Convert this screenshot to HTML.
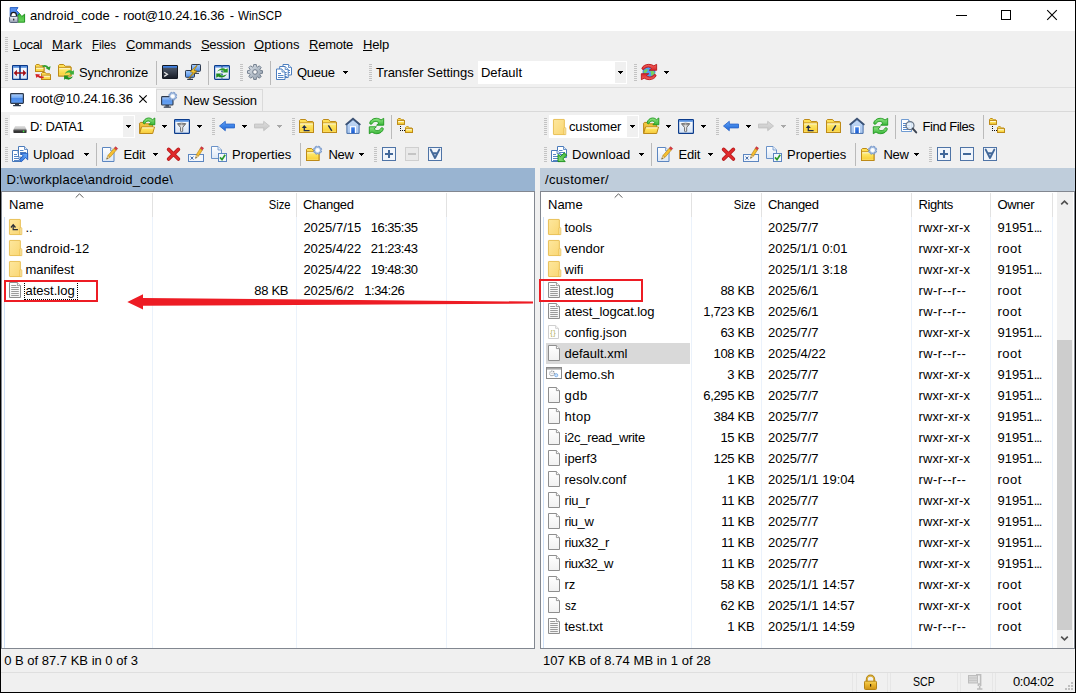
<!DOCTYPE html>
<html><head><meta charset="utf-8"><title>WinSCP</title>
<style>
html,body{margin:0;padding:0}
body{width:1076px;height:693px;overflow:hidden;background:#000;position:relative;font-family:"Liberation Sans",sans-serif;font-size:13px;color:#000}
#w{position:absolute;left:1px;top:1px;width:1074px;height:691px;background:#f0f0f0}
#c{position:absolute;left:0;top:0;width:1076px;height:693px}
.a{position:absolute;display:block}
.t{position:absolute;white-space:nowrap;line-height:16px;height:16px;font-size:13px}
.t u{text-decoration:underline;text-underline-offset:1px}
.grip{width:3px;background-image:repeating-linear-gradient(to bottom,#c3c3c3 0,#c3c3c3 1px,transparent 1px,transparent 2px)}
svg{overflow:visible;display:block}
</style></head><body>
<div id="w"></div>
<div id="c">
<div class="a" style="left:1px;top:1px;width:1074px;height:30px;background:#fff;"></div>
<div class="a" style="left:9px;top:7px"><svg width="16" height="16" viewBox="0 0 16 16"><defs><linearGradient id="g1" x1="0" y1="0" x2="0" y2="1"><stop offset="0" stop-color="#f4f6fa"/><stop offset="0.5" stop-color="#c4cad8"/><stop offset="1" stop-color="#8e97ab"/></linearGradient><linearGradient id="g2" x1="0" y1="0" x2="0" y2="1"><stop offset="0" stop-color="#5a92ee"/><stop offset="1" stop-color="#3f7fe4"/></linearGradient><linearGradient id="g3" x1="0" y1="0" x2="0" y2="1"><stop offset="0" stop-color="#3fb838"/><stop offset="1" stop-color="#6ad45e"/></linearGradient></defs><path d="M1.2 0.6 H9 L7.2 3.2 L10.4 6.4 L7.6 9.2 H1.2 Z" fill="url(#g2)" stroke="#1c57bd" stroke-width="0.9" stroke-linejoin="round"/><path d="M8.6 9 L10.4 6.5 L12.8 9.5 L15.6 7.2 V15.2 H8.6 Z" fill="url(#g3)" stroke="#128a12" stroke-width="0.9" stroke-linejoin="round"/><path d="M1.9 9.6 V8.2 a2.75 2.75 0 0 1 5.5 0 V9.6" stroke="#1b1b1f" stroke-width="1.2" fill="#fff"/><rect x="0.6" y="9.5" width="8.3" height="6" rx="0.9" fill="url(#g1)" stroke="#59647c" stroke-width="1"/><rect x="4.2" y="11.4" width="1.1" height="2.2" rx="0.5" fill="#111"/></svg></div>
<div class="t " style="left:30px;top:8px;letter-spacing:0.08px;">android_code</div>
<div class="t " style="left:114.8px;top:8px;">-</div>
<div class="t " style="left:123.2px;top:8px;letter-spacing:-0.2px;">root@10.24.16.36</div>
<div class="t " style="left:229.8px;top:8px;">-</div>
<div class="t " style="left:238.2px;top:8px;transform:scaleX(0.895);transform-origin:0 0;">WinSCP</div>
<div class="a" style="left:956px;top:15px;width:11px;height:1px;background:#000;"></div>
<div class="a" style="left:1001px;top:10px;width:8px;height:8px;border:1px solid #000"></div>
<svg class="a" style="left:1047px;top:10px" width="10" height="10" viewBox="0 0 10 10"><path d="M0.2 0.2 L9.8 9.8 M9.8 0.2 L0.2 9.8" stroke="#000" stroke-width="1.1" fill="none"/></svg>
<div class="a grip" style="left:5px;top:37px;height:15px"></div>
<div class="t " style="left:13px;top:37px;letter-spacing:-0.42px;"><u>L</u>ocal</div>
<div class="t " style="left:52px;top:37px;letter-spacing:0.4px;"><u>M</u>ark</div>
<div class="t " style="left:92px;top:37px;transform:scaleX(0.876);transform-origin:0 0;"><u>F</u>iles</div>
<div class="t " style="left:126px;top:37px;letter-spacing:-0.13px;"><u>C</u>ommands</div>
<div class="t " style="left:201px;top:37px;letter-spacing:-0.34px;"><u>S</u>ession</div>
<div class="t " style="left:254px;top:37px;letter-spacing:0.13px;"><u>O</u>ptions</div>
<div class="t " style="left:309px;top:37px;letter-spacing:-0.24px;"><u>R</u>emote</div>
<div class="t " style="left:363px;top:37px;letter-spacing:-0.13px;"><u>H</u>elp</div>
<div class="a grip" style="left:5px;top:64px;height:17px"></div>
<div class="a" style="left:12px;top:65px"><svg width="16" height="15" viewBox="0 0 16 15"><defs><linearGradient id="g4" x1="0" y1="0" x2="0" y2="1"><stop offset="0" stop-color="#ffffff"/><stop offset="1" stop-color="#d6e6fa"/></linearGradient></defs><rect x="0.6" y="0.6" width="14.8" height="13.8" rx="0.4" fill="url(#g4)" stroke="#0a3888" stroke-width="1.2"/><rect x="1.2" y="1.2" width="13.6" height="1.5" fill="#3d80dc"/><rect x="7.2" y="0.6" width="1.6" height="13.8" fill="#0a3888"/><path d="M1.7 8 L4.9 4.8 V7.2 H11.1 V4.8 L14.3 8 L11.1 11.2 V8.8 H4.9 V11.2 Z" fill="#a50f15"/></svg></div>
<div class="a" style="left:35px;top:64px"><svg width="16" height="16" viewBox="0 0 16 16"><defs><linearGradient id="g5" x1="0" y1="0" x2="0" y2="1"><stop offset="0" stop-color="#ffe45a"/><stop offset="1" stop-color="#f0bd2c"/></linearGradient><linearGradient id="g6" x1="0" y1="0" x2="0" y2="1"><stop offset="0" stop-color="#ffef7a"/><stop offset="0.75" stop-color="#f9d440"/><stop offset="1" stop-color="#fbe070"/></linearGradient><linearGradient id="g7" x1="0" y1="0" x2="0" y2="1"><stop offset="0" stop-color="#ffe45a"/><stop offset="1" stop-color="#f0bd2c"/></linearGradient><linearGradient id="g8" x1="0" y1="0" x2="0" y2="1"><stop offset="0" stop-color="#ffef7a"/><stop offset="0.75" stop-color="#f9d440"/><stop offset="1" stop-color="#fbe070"/></linearGradient></defs><path d="M0.5 7.5 V1.4 L1.4 0.5 H3.85 L5.45 1.7999999999999998 H8.3 L9.0 2.5 V7.5 Z" fill="url(#g5)" stroke="#bd8a18" stroke-width="1" stroke-linejoin="round"/><rect x="0.5" y="3.3" width="8.5" height="4.2" fill="url(#g6)" stroke="#bd8a18" stroke-width="1"/><path d="M1.2 4.2 H8.3" stroke="#fffbe2" stroke-width="0.9"/><path d="M6.5 15.5 V9.4 L7.4 8.5 H10.1 L11.7 9.8 H14.8 L15.5 10.5 V15.5 Z" fill="url(#g7)" stroke="#bd8a18" stroke-width="1" stroke-linejoin="round"/><rect x="6.5" y="11.3" width="9" height="4.199999999999999" fill="url(#g8)" stroke="#bd8a18" stroke-width="1"/><path d="M7.2 12.200000000000001 H14.8" stroke="#fffbe2" stroke-width="0.9"/><path d="M7.5 2.3 Q11.5 0.8 13 4" fill="none" stroke="#2f9e2f" stroke-width="1.8"/><path d="M10.6 4 L15.6 2.2 L14.6 6.4 Z" fill="#2f9e2f"/><path d="M8.6 13.2 Q4.6 14 2.6 11.2" fill="none" stroke="#d3222a" stroke-width="1.8"/><path d="M0.4 10 L5.2 10.4 L1.4 14 Z" fill="#d3222a"/></svg></div>
<div class="a" style="left:58px;top:64px"><svg width="16" height="16" viewBox="0 0 16 16"><defs><linearGradient id="g9" x1="0" y1="0" x2="0" y2="1"><stop offset="0" stop-color="#ffe45a"/><stop offset="1" stop-color="#f0bd2c"/></linearGradient><linearGradient id="g10" x1="0" y1="0" x2="0" y2="1"><stop offset="0" stop-color="#ffef7a"/><stop offset="0.75" stop-color="#f9d440"/><stop offset="1" stop-color="#fbe070"/></linearGradient></defs><path d="M0.5 12.0 V1.4 L1.4 0.5 H5.6 L7.2 2.275 H12.3 L13.0 2.975 V12.0 Z" fill="url(#g9)" stroke="#bd8a18" stroke-width="1" stroke-linejoin="round"/><rect x="0.5" y="3.775" width="12.5" height="8.225" fill="url(#g10)" stroke="#bd8a18" stroke-width="1"/><path d="M1.2 4.675 H12.3" stroke="#fffbe2" stroke-width="0.9"/><g transform="translate(5.900,6.040) scale(0.68,0.62)"><path d="M1.2 6.2 C3 2.4 6 0.5 8.2 0.5 C10 0.5 11 1.1 12 2 L14.7 0.3 V7.2 H7.6 L9.9 5.1 C9.2 4.3 8.2 3.8 7 3.8 C5 3.8 3 4.6 1.2 6.2 Z" fill="#3cae3c"/><path d="M1.2 6.2 C3 2.4 6 0.5 8.2 0.5 C10 0.5 11 1.1 12 2 L14.7 0.3 V7.2 H7.6 L9.9 5.1 C9.2 4.3 8.2 3.8 7 3.8 C5 3.8 3 4.6 1.2 6.2 Z" fill="#1f8f1f" transform="rotate(180 7.5 8)"/></g></svg></div>
<div class="t " style="left:79px;top:65px;letter-spacing:-0.23px;">Synchronize</div>
<div class="a" style="left:156px;top:61px;width:1px;height:24px;background:#bababa;"></div>
<div class="a" style="left:162px;top:65px"><svg width="16" height="14" viewBox="0 0 16 14"><defs><linearGradient id="g11" x1="0" y1="0" x2="0" y2="1"><stop offset="0" stop-color="#566274"/><stop offset="1" stop-color="#171c26"/></linearGradient></defs><rect x="0.5" y="0.5" width="15" height="13" rx="0.3" fill="url(#g11)" stroke="#141922" stroke-width="1"/><rect x="1" y="1" width="14" height="1.7" fill="#3f7fe0"/><path d="M2.2 7.2 L5.4 9.3 L2.2 11.4" fill="none" stroke="#e6e6e6" stroke-width="1.3"/></svg></div>
<div class="a" style="left:185px;top:64px"><svg width="16" height="16" viewBox="0 0 16 16"><defs><linearGradient id="g12" x1="0" y1="0" x2="0" y2="1"><stop offset="0" stop-color="#a6ccfa"/><stop offset="1" stop-color="#4d8eea"/></linearGradient><linearGradient id="g13" x1="0" y1="0" x2="1" y2="1"><stop offset="0" stop-color="#fff68a"/><stop offset="0.5" stop-color="#f6cc38"/><stop offset="1" stop-color="#dc9a10"/></linearGradient></defs><rect x="6.5" y="0.5" width="9" height="6.8" rx="0.7" fill="url(#g12)" stroke="#2c384c" stroke-width="1"/><path d="M11 7.3 V9 M9.5 9.4 H14" stroke="#2c384c" stroke-width="1"/><rect x="0.5" y="6.5" width="9" height="6.8" rx="0.7" fill="url(#g12)" stroke="#2c384c" stroke-width="1"/><path d="M5 13.3 V15 M2.2 15.4 H8" stroke="#2c384c" stroke-width="1.1"/><path d="M12.2 1.2 L5.4 7.8 L8.2 8.5 L3.8 14.2 L11.8 7.1 L9 6.4 Z" fill="url(#g13)" stroke="#a87808" stroke-width="0.8" stroke-linejoin="round"/></svg></div>
<div class="a" style="left:208px;top:61px;width:1px;height:24px;background:#bababa;"></div>
<div class="a" style="left:214px;top:65px"><svg width="16" height="15" viewBox="0 0 16 15"><defs><linearGradient id="g14" x1="0" y1="0" x2="0" y2="1"><stop offset="0" stop-color="#ffffff"/><stop offset="1" stop-color="#d8e6f8"/></linearGradient></defs><rect x="0.6" y="0.6" width="14.8" height="13.8" rx="0.8" fill="url(#g14)" stroke="#0c3c8c" stroke-width="1.2"/><rect x="1.2" y="1.2" width="13.6" height="1.3" fill="#3d80dc"/><path d="M8 0.6 V14.4" stroke="#aebbd4" stroke-width="1"/><rect x="7.4" y="0.6" width="1.2" height="1.9" fill="#0c3c8c"/><rect x="7.4" y="5.7" width="1.2" height="1.3" fill="#0c3c8c"/><rect x="7.4" y="8.9" width="1.2" height="1.3" fill="#0c3c8c"/><rect x="7.4" y="13.4" width="1.2" height="1" fill="#0c3c8c"/><g transform="translate(2.000,2.940) scale(0.8,0.62)"><path d="M1.2 6.2 C3 2.4 6 0.5 8.2 0.5 C10 0.5 11 1.1 12 2 L14.7 0.3 V7.2 H7.6 L9.9 5.1 C9.2 4.3 8.2 3.8 7 3.8 C5 3.8 3 4.6 1.2 6.2 Z" fill="#2a9a2a"/><path d="M1.2 6.2 C3 2.4 6 0.5 8.2 0.5 C10 0.5 11 1.1 12 2 L14.7 0.3 V7.2 H7.6 L9.9 5.1 C9.2 4.3 8.2 3.8 7 3.8 C5 3.8 3 4.6 1.2 6.2 Z" fill="#1f8c1f" transform="rotate(180 7.5 8)"/></g></svg></div>
<div class="a grip" style="left:240px;top:64px;height:17px"></div>
<div class="a" style="left:247px;top:64px"><svg width="16" height="16" viewBox="0 0 16 16"><defs><linearGradient id="g15" x1="0" y1="0" x2="1" y2="1"><stop offset="0" stop-color="#dde3ea"/><stop offset="0.5" stop-color="#b4bec9"/><stop offset="1" stop-color="#909caa"/></linearGradient></defs><path d="M15.49 6.71 L15.49 9.29 L13.37 9.60 L12.93 10.66 L14.21 12.39 L12.39 14.21 L10.66 12.93 L9.60 13.37 L9.29 15.49 L6.71 15.49 L6.40 13.37 L5.34 12.93 L3.61 14.21 L1.79 12.39 L3.07 10.66 L2.63 9.60 L0.51 9.29 L0.51 6.71 L2.63 6.40 L3.07 5.34 L1.79 3.61 L3.61 1.79 L5.34 3.07 L6.40 2.63 L6.71 0.51 L9.29 0.51 L9.60 2.63 L10.66 3.07 L12.39 1.79 L14.21 3.61 L12.93 5.34 L13.37 6.40 Z" fill="url(#g15)" stroke="#6c7888" stroke-width="0.9" stroke-linejoin="round"/><circle cx="8" cy="8" r="2.3" fill="#f6f6f6" stroke="#6c7888" stroke-width="1"/></svg></div>
<div class="a" style="left:270px;top:61px;width:1px;height:24px;background:#bababa;"></div>
<div class="a" style="left:276px;top:64px"><svg width="16" height="16" viewBox="0 0 16 16"><path d="M7.0 0.5 H12.5 L15.5 3.5 V11.0 H7.0 Z" fill="#fff" stroke="#4d7fbf" stroke-width="1"/><path d="M12.5 0.5 V3.5 H15.5" fill="#dce8f6" stroke="#4d7fbf" stroke-width="0.8"/><path d="M8.5 4.5 H11.5" stroke="#5585c5" stroke-width="1"/><path d="M8.5 6.5 H14.0" stroke="#5585c5" stroke-width="1"/><path d="M8.5 8.5 H14.0" stroke="#5585c5" stroke-width="1"/><path d="M3.7 2.5 H9.2 L12.2 5.5 V13.5 H3.7 Z" fill="#fff" stroke="#4d7fbf" stroke-width="1"/><path d="M9.2 2.5 V5.5 H12.2" fill="#dce8f6" stroke="#4d7fbf" stroke-width="0.8"/><path d="M5.2 6.5 H8.2" stroke="#5585c5" stroke-width="1"/><path d="M5.2 8.5 H10.7" stroke="#5585c5" stroke-width="1"/><path d="M5.2 10.5 H10.7" stroke="#5585c5" stroke-width="1"/><path d="M5.2 12.5 H10.7" stroke="#5585c5" stroke-width="1"/><path d="M0.5 5.0 H6.0 L9.0 8.0 V15.5 H0.5 Z" fill="#fff" stroke="#4d7fbf" stroke-width="1"/><path d="M6.0 5.0 V8.0 H9.0" fill="#dce8f6" stroke="#4d7fbf" stroke-width="0.8"/><path d="M2 9.5 H5.0" stroke="#5585c5" stroke-width="1"/><path d="M2 11.5 H7.5" stroke="#5585c5" stroke-width="1"/><path d="M2 13.5 H7.5" stroke="#5585c5" stroke-width="1"/></svg></div>
<div class="t " style="left:297px;top:65px;letter-spacing:-0.27px;">Queue</div>
<div class="a" style="left:343px;top:71px;width:5px;height:1px;background:#000"></div><div class="a" style="left:344px;top:72px;width:3px;height:1px;background:#000"></div><div class="a" style="left:345px;top:73px;width:1px;height:1px;background:#000"></div>
<div class="a grip" style="left:369px;top:64px;height:17px"></div>
<div class="t " style="left:376px;top:65px;letter-spacing:-0.05px;">Transfer Settings</div>
<div class="a" style="left:478px;top:61px;width:149px;height:23px;background:#fff;"></div>
<div class="t " style="left:481px;top:65px;letter-spacing:-0.03px;">Default</div>
<div class="a" style="left:615px;top:62px;width:11px;height:21px;background:#f0f0f0;"></div>
<div class="a" style="left:618px;top:71px;width:5px;height:1px;background:#000"></div><div class="a" style="left:619px;top:72px;width:3px;height:1px;background:#000"></div><div class="a" style="left:620px;top:73px;width:1px;height:1px;background:#000"></div>
<div class="a grip" style="left:634px;top:64px;height:17px"></div>
<div class="a" style="left:641px;top:64px"><svg width="16" height="16" viewBox="0 0 16 16"><defs><linearGradient id="g16" x1="0" y1="0" x2="0" y2="1"><stop offset="0" stop-color="#f4625c"/><stop offset="1" stop-color="#d6262a"/></linearGradient></defs><circle cx="8" cy="8" r="6" fill="#4d9df6" stroke="#2a6fd0" stroke-width="0.8"/><path d="M2.4 7.4 Q3.6 4.4 6.8 5 Q6.6 8.4 3.2 9.8 Z M9.2 7 Q12.6 5.8 13.8 8.6 Q12.8 12 10 11.8 Q10.8 9.4 9.2 7 Z" fill="#74d262"/><g transform="translate(0.2,0.1) scale(1.05,0.86)"><path d="M0.7 5 C1.2 2.4 4 0.3 7.2 0.3 C9.2 0.3 10.8 1 12 2 L14.7 0.3 V7.2 H7.6 L9.9 5.1 C9 4 8 3.4 6.8 3.4 C5 3.4 3.6 4.4 3 5.8 C2.4 6.6 0.5 6.3 0.7 5 Z" fill="url(#g16)" stroke="#b8191d" stroke-width="0.95" stroke-linejoin="round"/></g><g transform="rotate(180 8 8)"><g transform="translate(0.2,0.1) scale(1.05,0.86)"><path d="M0.7 5 C1.2 2.4 4 0.3 7.2 0.3 C9.2 0.3 10.8 1 12 2 L14.7 0.3 V7.2 H7.6 L9.9 5.1 C9 4 8 3.4 6.8 3.4 C5 3.4 3.6 4.4 3 5.8 C2.4 6.6 0.5 6.3 0.7 5 Z" fill="url(#g16)" stroke="#b8191d" stroke-width="0.95" stroke-linejoin="round"/></g></g></svg></div>
<div class="a" style="left:664px;top:71px;width:5px;height:1px;background:#000"></div><div class="a" style="left:665px;top:72px;width:3px;height:1px;background:#000"></div><div class="a" style="left:666px;top:73px;width:1px;height:1px;background:#000"></div>
<div class="a" style="left:1px;top:87px;width:1074px;height:1px;background:#dfdfdf;"></div>
<div class="a" style="left:156px;top:111px;width:919px;height:1px;background:#d9d9d9;"></div>
<div class="a" style="left:1px;top:88px;width:155px;height:24px;background:#fff;"></div>
<div class="a" style="left:10px;top:93px"><svg width="14" height="14" viewBox="0 0 14 14"><defs><linearGradient id="g17" x1="0" y1="0" x2="0" y2="1"><stop offset="0" stop-color="#b4d2fb"/><stop offset="0.45" stop-color="#6da6f2"/><stop offset="0.5" stop-color="#4a8aea"/><stop offset="1" stop-color="#5f9cf0"/></linearGradient></defs><rect x="0.6" y="0.6" width="12.8" height="9.8" rx="0.8" fill="url(#g17)" stroke="#2d394b" stroke-width="1.2"/><rect x="5" y="10.8" width="4" height="1.4" fill="#2d394b"/><rect x="3" y="12" width="8" height="1.2" rx="0.4" fill="#2d394b"/></svg></div>
<div class="t " style="left:31px;top:91px;letter-spacing:-0.16px;">root@10.24.16.36</div>
<svg class="a" style="left:139px;top:95px" width="8" height="8" viewBox="0 0 8 8"><path d="M0.3 0.3 L7.7 7.7 M7.7 0.3 L0.3 7.7" stroke="#000" stroke-width="1.15" fill="none"/></svg>
<div class="a" style="left:156px;top:89px;width:105px;height:21px;border:1px solid #dadada;border-bottom:none;background:#f0f0f0"></div>
<div class="a" style="left:161px;top:92px"><svg width="16" height="16" viewBox="0 0 16 16"><defs><linearGradient id="g18" x1="0" y1="0" x2="0" y2="1"><stop offset="0" stop-color="#b4d2fb"/><stop offset="0.5" stop-color="#5b98ee"/><stop offset="1" stop-color="#6aa4f2"/></linearGradient></defs><rect x="0.6" y="4.6" width="11.4" height="8.4" rx="0.8" fill="url(#g18)" stroke="#2d394b" stroke-width="1.1"/><rect x="4.4" y="13.2" width="3.6" height="1.4" fill="#2d394b"/><rect x="2.6" y="14.6" width="7.4" height="1.1" rx="0.4" fill="#2d394b"/><path d="M15.72 4.99 L15.10 6.49 L13.87 6.08 L13.58 6.37 L13.99 7.60 L12.49 8.22 L11.91 7.06 L11.49 7.06 L10.91 8.22 L9.41 7.60 L9.82 6.37 L9.53 6.08 L8.30 6.49 L7.68 4.99 L8.84 4.41 L8.84 3.99 L7.68 3.41 L8.30 1.91 L9.53 2.32 L9.82 2.03 L9.41 0.80 L10.91 0.18 L11.49 1.34 L11.91 1.34 L12.49 0.18 L13.99 0.80 L13.58 2.03 L13.87 2.32 L15.10 1.91 L15.72 3.41 L14.56 3.99 L14.56 4.41 Z" fill="#a9c0e2" stroke="#6f92c8" stroke-width="0.8" stroke-linejoin="round"/><circle cx="11.7" cy="4.2" r="2.05" fill="#ffffff" stroke="#dfe8f5" stroke-width="0.5"/></svg></div>
<div class="t " style="left:183.5px;top:93px;letter-spacing:-0.23px;">New Session</div>
<div class="a grip" style="left:5px;top:118px;height:17px"></div>
<div class="a" style="left:10px;top:115px;width:125px;height:23px;background:#fff;"></div>
<div class="a" style="left:13px;top:119px"><svg width="14" height="16" viewBox="0 0 14 16"><defs><linearGradient id="g19" x1="0" y1="0" x2="0" y2="1"><stop offset="0" stop-color="#e4e4e4"/><stop offset="1" stop-color="#b8b8b8"/></linearGradient></defs><path d="M2.2 7 H11.8 L13.6 10.4 H0.4 Z" fill="url(#g19)"/><rect x="0.4" y="10.4" width="13.2" height="3.6" rx="0.7" fill="#353535"/><rect x="1" y="11" width="12" height="0.7" fill="#5a5a5a"/><circle cx="10.6" cy="12.4" r="0.85" fill="#43e243"/></svg></div>
<div class="t " style="left:30px;top:119px;letter-spacing:-0.39px;">D: DATA1</div>
<div class="a" style="left:123px;top:116px;width:11px;height:21px;background:#f0f0f0;"></div>
<div class="a" style="left:126px;top:125px;width:5px;height:1px;background:#000"></div><div class="a" style="left:127px;top:126px;width:3px;height:1px;background:#000"></div><div class="a" style="left:128px;top:127px;width:1px;height:1px;background:#000"></div>
<div class="a" style="left:139px;top:118px"><svg width="16" height="16" viewBox="0 0 16 16"><defs><linearGradient id="g22" x1="0" y1="0" x2="0" y2="1"><stop offset="0" stop-color="#fff3a0"/><stop offset="0.2" stop-color="#ffe660"/><stop offset="1" stop-color="#f6c93c"/></linearGradient><linearGradient id="g23" x1="0" y1="0" x2="0" y2="1"><stop offset="0" stop-color="#f5cb45"/><stop offset="1" stop-color="#e3ab2c"/></linearGradient><linearGradient id="g24" x1="0" y1="0" x2="0" y2="1"><stop offset="0" stop-color="#8fe482"/><stop offset="1" stop-color="#3ab63a"/></linearGradient></defs><path d="M0.6 15.4 V5.2 L1.4 4.4 H5.4 L6.6 5.8 H12.8 L13.4 6.4 V9.4 H2.6 Z" fill="url(#g23)" stroke="#b98618" stroke-width="1" stroke-linejoin="round"/><path d="M0.7 15.5 L2.5 9 H15.5 L13.7 15.5 Z" fill="url(#g22)" stroke="#bd8a1a" stroke-width="1" stroke-linejoin="round"/><path d="M3.2 9.9 H14.6" stroke="#fffbe0" stroke-width="0.9"/><g transform="translate(3.6,-0.3) scale(0.83,0.98)"><path d="M0.7 5 C1.2 2.4 4 0.3 7.2 0.3 C9.2 0.3 10.8 1 12 2 L14.7 0.3 V7.2 H7.6 L9.9 5.1 C9 4 8 3.4 6.8 3.4 C5 3.4 3.6 4.4 3 5.8 C2.4 6.6 0.5 6.3 0.7 5 Z" fill="url(#g24)" stroke="#1e971e" stroke-width="1" stroke-linejoin="round"/></g></svg></div>
<div class="a" style="left:162px;top:125px;width:5px;height:1px;background:#000"></div><div class="a" style="left:163px;top:126px;width:3px;height:1px;background:#000"></div><div class="a" style="left:164px;top:127px;width:1px;height:1px;background:#000"></div>
<div class="a" style="left:174px;top:119px"><svg width="16" height="15" viewBox="0 0 16 15"><defs><linearGradient id="g25" x1="0" y1="0" x2="0" y2="1"><stop offset="0" stop-color="#ffffff"/><stop offset="1" stop-color="#d4e3f6"/></linearGradient><linearGradient id="g26" x1="0" y1="0" x2="1" y2="0"><stop offset="0" stop-color="#8c8c8c"/><stop offset="0.5" stop-color="#e6e6e6"/><stop offset="1" stop-color="#8c8c8c"/></linearGradient></defs><rect x="0.6" y="0.6" width="14.8" height="13.8" rx="0.6" fill="url(#g25)" stroke="#0c3c8c" stroke-width="1.2"/><rect x="1.2" y="1.2" width="13.6" height="1.5" fill="#3d80dc"/><path d="M3.4 4.7 Q7.6 3.7 11.8 4.7 L8.7 8.5 V12.3 Q7.6 13.1 6.5 12.3 V8.5 Z" fill="url(#g26)" stroke="#6a6a6a" stroke-width="0.9" stroke-linejoin="round"/><path d="M4 5.2 Q7.6 6.2 11.2 5.2" fill="none" stroke="#777" stroke-width="0.7"/></svg></div>
<div class="a" style="left:197px;top:125px;width:5px;height:1px;background:#000"></div><div class="a" style="left:198px;top:126px;width:3px;height:1px;background:#000"></div><div class="a" style="left:199px;top:127px;width:1px;height:1px;background:#000"></div>
<div class="a grip" style="left:212px;top:118px;height:17px"></div>
<div class="a" style="left:219px;top:121px"><svg width="16" height="10" viewBox="0 0 16 10"><defs><linearGradient id="g27" x1="0" y1="0" x2="0" y2="1"><stop offset="0" stop-color="#6eaaf6"/><stop offset="0.5" stop-color="#3b82e6"/><stop offset="1" stop-color="#2a6ad2"/></linearGradient></defs><path d="M0.5 5 L6.3 0.3 V3.1 H15.5 V6.9 H6.3 V9.7 Z" fill="url(#g27)" stroke="#2a66cc" stroke-width="0.9" stroke-linejoin="round"/></svg></div>
<div class="a" style="left:242px;top:125px;width:5px;height:1px;background:#000"></div><div class="a" style="left:243px;top:126px;width:3px;height:1px;background:#000"></div><div class="a" style="left:244px;top:127px;width:1px;height:1px;background:#000"></div>
<div class="a" style="left:254px;top:121px"><svg width="16" height="10" viewBox="0 0 16 10"><defs><linearGradient id="g28" x1="0" y1="0" x2="0" y2="1"><stop offset="0" stop-color="#dedede"/><stop offset="1" stop-color="#c6c6c6"/></linearGradient></defs><path d="M0.5 5 L6.3 0.3 V3.1 H15.5 V6.9 H6.3 V9.7 Z" fill="url(#g28)" stroke="#c2c2c2" stroke-width="0.9" stroke-linejoin="round" transform="translate(16,0) scale(-1,1)"/></svg></div>
<div class="a" style="left:277px;top:125px;width:5px;height:1px;background:#a8a8a8"></div><div class="a" style="left:278px;top:126px;width:3px;height:1px;background:#a8a8a8"></div><div class="a" style="left:279px;top:127px;width:1px;height:1px;background:#a8a8a8"></div>
<div class="a grip" style="left:292px;top:118px;height:17px"></div>
<div class="a" style="left:299px;top:119px"><svg width="16" height="14" viewBox="0 0 16 14"><defs><linearGradient id="g29" x1="0" y1="0" x2="0" y2="1"><stop offset="0" stop-color="#ffe45a"/><stop offset="1" stop-color="#f0bd2c"/></linearGradient><linearGradient id="g30" x1="0" y1="0" x2="0" y2="1"><stop offset="0" stop-color="#ffef7a"/><stop offset="0.75" stop-color="#f9d440"/><stop offset="1" stop-color="#fbe070"/></linearGradient></defs><path d="M0.5 13.5 V1.4 L1.4 0.5 H6.6 L8.2 2.5 H13.8 L14.5 3.2 V13.5 Z" fill="url(#g29)" stroke="#bd8a18" stroke-width="1" stroke-linejoin="round"/><rect x="0.5" y="4.0" width="14" height="9.5" fill="url(#g30)" stroke="#bd8a18" stroke-width="1"/><path d="M1.2 4.9 H13.8" stroke="#fffbe2" stroke-width="0.9"/><path d="M5.3 8 V11.6 H10.6" fill="none" stroke="#1f2d50" stroke-width="1.3"/><path d="M2.8 8.9 L5.3 5.9 L7.8 8.9 Z" fill="#1f2d50"/></svg></div>
<div class="a" style="left:322px;top:119px"><svg width="16" height="14" viewBox="0 0 16 14"><defs><linearGradient id="g31" x1="0" y1="0" x2="0" y2="1"><stop offset="0" stop-color="#ffe45a"/><stop offset="1" stop-color="#f0bd2c"/></linearGradient><linearGradient id="g32" x1="0" y1="0" x2="0" y2="1"><stop offset="0" stop-color="#ffef7a"/><stop offset="0.75" stop-color="#f9d440"/><stop offset="1" stop-color="#fbe070"/></linearGradient></defs><path d="M0.5 13.5 V1.4 L1.4 0.5 H6.6 L8.2 2.5 H13.8 L14.5 3.2 V13.5 Z" fill="url(#g31)" stroke="#bd8a18" stroke-width="1" stroke-linejoin="round"/><rect x="0.5" y="4.0" width="14" height="9.5" fill="url(#g32)" stroke="#bd8a18" stroke-width="1"/><path d="M1.2 4.9 H13.8" stroke="#fffbe2" stroke-width="0.9"/><path d="M6.4 6.3 L9.8 11.8" stroke="#1f2d50" stroke-width="1.4"/></svg></div>
<div class="a" style="left:345px;top:118px"><svg width="16" height="16" viewBox="0 0 16 16"><defs><linearGradient id="g35" x1="0" y1="0" x2="0" y2="1"><stop offset="0" stop-color="#c4d9f4"/><stop offset="1" stop-color="#a9c6ee"/></linearGradient><linearGradient id="g36" x1="0" y1="0" x2="0" y2="1"><stop offset="0" stop-color="#3d7fe8"/><stop offset="1" stop-color="#1f5fd0"/></linearGradient></defs><path d="M1.9 6.8 V15.4 H14.1 V6.8 L8 1.6 Z" fill="url(#g35)" stroke="#4870aa" stroke-width="1"/><path d="M0.6 6.9 L8 0.7 L15.4 6.9" fill="none" stroke="#3b5173" stroke-width="1.7" stroke-linejoin="miter"/><rect x="5" y="8.2" width="6" height="6.8" fill="#ffffff"/><rect x="6.2" y="9.3" width="3.6" height="5.9" fill="url(#g36)"/></svg></div>
<div class="a" style="left:368.5px;top:118px"><svg width="15" height="16" viewBox="0 0 15 16"><defs><linearGradient id="g37" x1="0" y1="0" x2="0" y2="1"><stop offset="0" stop-color="#8fe482"/><stop offset="1" stop-color="#3ab63a"/></linearGradient><linearGradient id="g38" x1="0" y1="0" x2="0" y2="1"><stop offset="0" stop-color="#3ab63a"/><stop offset="1" stop-color="#8fe482"/></linearGradient></defs><g transform="translate(0.000,0.000) scale(1,1)"><path d="M0.7 5 C1.2 2.4 4 0.3 7.2 0.3 C9.2 0.3 10.8 1 12 2 L14.7 0.3 V7.2 H7.6 L9.9 5.1 C9 4 8 3.4 6.8 3.4 C5 3.4 3.6 4.4 3 5.8 C2.4 6.6 0.5 6.3 0.7 5 Z" fill="url(#g37)" stroke="#1e971e" stroke-width="0.90" stroke-linejoin="round"/><path d="M0.7 5 C1.2 2.4 4 0.3 7.2 0.3 C9.2 0.3 10.8 1 12 2 L14.7 0.3 V7.2 H7.6 L9.9 5.1 C9 4 8 3.4 6.8 3.4 C5 3.4 3.6 4.4 3 5.8 C2.4 6.6 0.5 6.3 0.7 5 Z" fill="url(#g38)" stroke="#1e971e" stroke-width="0.90" stroke-linejoin="round" transform="rotate(180 7.5 8)"/></g></svg></div>
<div class="a" style="left:391px;top:115px;width:1px;height:24px;background:#bababa;"></div>
<div class="a" style="left:397px;top:118px"><svg width="16" height="15" viewBox="0 0 16 15"><defs><linearGradient id="g39" x1="0" y1="0" x2="0" y2="1"><stop offset="0" stop-color="#ffe45a"/><stop offset="1" stop-color="#f0bd2c"/></linearGradient><linearGradient id="g40" x1="0" y1="0" x2="0" y2="1"><stop offset="0" stop-color="#ffef7a"/><stop offset="0.75" stop-color="#f9d440"/><stop offset="1" stop-color="#fbe070"/></linearGradient><linearGradient id="g41" x1="0" y1="0" x2="0" y2="1"><stop offset="0" stop-color="#ffe45a"/><stop offset="1" stop-color="#f0bd2c"/></linearGradient><linearGradient id="g42" x1="0" y1="0" x2="0" y2="1"><stop offset="0" stop-color="#ffef7a"/><stop offset="0.75" stop-color="#f9d440"/><stop offset="1" stop-color="#fbe070"/></linearGradient></defs><path d="M0.5 6.3 V1.4 L1.4 0.5 H3.1 L4.7 1.7999999999999998 H6.8 L7.5 2.5 V6.3 Z" fill="url(#g39)" stroke="#bd8a18" stroke-width="1" stroke-linejoin="round"/><rect x="0.5" y="2.5999999999999996" width="7" height="3.7" fill="url(#g40)" stroke="#bd8a18" stroke-width="1"/><path d="M1.2 3.4999999999999996 H6.8" stroke="#fffbe2" stroke-width="0.9"/><path d="M8.5 14.5 V9.6 L9.4 8.7 H11.1 L12.7 10.0 H14.8 L15.5 10.7 V14.5 Z" fill="url(#g41)" stroke="#bd8a18" stroke-width="1" stroke-linejoin="round"/><rect x="8.5" y="10.799999999999999" width="7" height="3.700000000000001" fill="url(#g42)" stroke="#bd8a18" stroke-width="1"/><path d="M9.2 11.7 H14.8" stroke="#fffbe2" stroke-width="0.9"/><rect x="3" y="8" width="1" height="1" fill="#111"/><rect x="3" y="10" width="1" height="1" fill="#111"/><rect x="3" y="12" width="1" height="1" fill="#111"/><rect x="5" y="12" width="1" height="1" fill="#111"/><rect x="7" y="12" width="1" height="1" fill="#111"/></svg></div>
<div class="a grip" style="left:5px;top:147px;height:15px"></div>
<div class="a" style="left:12px;top:146px"><svg width="16" height="16" viewBox="0 0 16 16"><defs><linearGradient id="g43" x1="1" y1="0" x2="0" y2="1"><stop offset="0" stop-color="#6aaaf8"/><stop offset="1" stop-color="#2f74e0"/></linearGradient></defs><path d="M0.5 4.5 H6.0 L9.0 7.5 V15.5 H0.5 Z" fill="#fff" stroke="#4a7aba" stroke-width="1"/><path d="M6.0 4.5 V7.5 H9.0" fill="#dce8f6" stroke="#4a7aba" stroke-width="0.8"/><path d="M2 8.5 H5.0" stroke="#5585c5" stroke-width="1"/><path d="M2 10.5 H7.5" stroke="#5585c5" stroke-width="1"/><path d="M2 12.5 H7.5" stroke="#5585c5" stroke-width="1"/><path d="M2 14.5 H7.5" stroke="#5585c5" stroke-width="1"/><path d="M6.5 0.5 H12.5 L15.5 3.5 V11.1 H6.5 Z" fill="#fff" stroke="#4a7aba" stroke-width="1"/><path d="M12.5 0.5 V3.5 H15.5" fill="#dce8f6" stroke="#4a7aba" stroke-width="0.8"/><path d="M8 4.5 H11.5" stroke="#5585c5" stroke-width="1"/><path d="M8 6.5 H14" stroke="#5585c5" stroke-width="1"/><path d="M8 8.5 H14" stroke="#5585c5" stroke-width="1"/><path d="M8.4 7.3 H15.7 V13.8 L13.5 11.7 L9.3 15.8 L7.3 13.7 L11.3 9.9 Z" fill="url(#g43)" stroke="#1c55b8" stroke-width="0.9" stroke-linejoin="round"/></svg></div>
<div class="t " style="left:33px;top:147px;">Upload</div>
<div class="a" style="left:84px;top:153px;width:5px;height:1px;background:#000"></div><div class="a" style="left:85px;top:154px;width:3px;height:1px;background:#000"></div><div class="a" style="left:86px;top:155px;width:1px;height:1px;background:#000"></div>
<div class="a" style="left:96px;top:143px;width:1px;height:23px;background:#bababa;"></div>
<div class="a" style="left:102px;top:146px"><svg width="16" height="16" viewBox="0 0 16 16"><defs><linearGradient id="g45" x1="0" y1="0" x2="0" y2="1"><stop offset="0" stop-color="#ffffff"/><stop offset="1" stop-color="#dbe7f6"/></linearGradient></defs><path d="M0.5 1.5 H8.6 L12 4.8 V15.5 H0.5 Z" fill="url(#g45)" stroke="#5c86c0" stroke-width="1"/><path d="M8.6 1.5 V4.8 H12" fill="#e6eefa" stroke="#5c86c0" stroke-width="0.8"/><g transform="translate(14.6,1.6) rotate(130.76)"><rect x="0" y="-1.4" width="2.4" height="2.8" fill="#e0383e" stroke="#a8242a" stroke-width="0.5"/><rect x="2.4" y="-1.4" width="9.315351775261318" height="2.8" fill="#f6c032" stroke="#b88616" stroke-width="0.6"/><path d="M11.715351775261318 -1.4 L14.415351775261318 -0.45 L15.315351775261318 0 L14.415351775261318 0.45 L11.715351775261318 1.4 Z" fill="#f0d8a8" stroke="#b88616" stroke-width="0.5"/><path d="M14.015351775261317 -0.6 L15.315351775261318 0 L14.015351775261317 0.6 Z" fill="#333"/></g></svg></div>
<div class="t " style="left:123.5px;top:147px;letter-spacing:-0.2px;">Edit</div>
<div class="a" style="left:153px;top:153px;width:5px;height:1px;background:#000"></div><div class="a" style="left:154px;top:154px;width:3px;height:1px;background:#000"></div><div class="a" style="left:155px;top:155px;width:1px;height:1px;background:#000"></div>
<div class="a" style="left:165.5px;top:147px"><svg width="16" height="15" viewBox="0 0 16 15"><path d="M2.6 2.4 L12.4 12 M12.4 2.4 L2.6 12" stroke="#b01818" stroke-width="3.6" stroke-linecap="round"/><path d="M2.6 2.4 L12.4 12 M12.4 2.4 L2.6 12" stroke="#e02a2c" stroke-width="2.3" stroke-linecap="round"/></svg></div>
<div class="a" style="left:188px;top:146px"><svg width="16" height="16" viewBox="0 0 16 16"><rect x="0.5" y="8.5" width="15" height="7" fill="#f2f6fc" stroke="#5c86c0" stroke-width="1"/><path d="M2.6 10.6 L5.4 13.6 M5.4 10.6 L2.6 13.6" stroke="#3c68a8" stroke-width="1"/><g transform="translate(14.4,1.4) rotate(121.72)"><rect x="0" y="-1.3" width="2.4" height="2.6" fill="#e0383e" stroke="#a8242a" stroke-width="0.5"/><rect x="2.4" y="-1.3" width="6.932130528261769" height="2.6" fill="#f6c032" stroke="#b88616" stroke-width="0.6"/><path d="M9.33213052826177 -1.3 L12.032130528261769 -0.45 L12.93213052826177 0 L12.032130528261769 0.45 L9.33213052826177 1.3 Z" fill="#f0d8a8" stroke="#b88616" stroke-width="0.5"/><path d="M11.632130528261769 -0.6 L12.93213052826177 0 L11.632130528261769 0.6 Z" fill="#333"/></g></svg></div>
<div class="a" style="left:211px;top:146px"><svg width="16" height="16" viewBox="0 0 16 16"><defs><linearGradient id="g46" x1="0" y1="0" x2="0" y2="1"><stop offset="0" stop-color="#ffffff"/><stop offset="1" stop-color="#dbe7f6"/></linearGradient></defs><path d="M0.5 0.5 H7 L10.5 4 V12.5 H0.5 Z" fill="url(#g46)" stroke="#6a92c8" stroke-width="1"/><path d="M7 0.5 V4 H10.5" fill="#e6eefa" stroke="#6a92c8" stroke-width="0.8"/><rect x="7.5" y="7.5" width="8" height="8" fill="#f4f8fd" stroke="#5c86c0" stroke-width="1"/><path d="M9 11.4 L11 13.6 L14.2 8.8" fill="none" stroke="#2a9a2a" stroke-width="1.7"/></svg></div>
<div class="t " style="left:232px;top:147px;">Properties</div>
<div class="a" style="left:300px;top:143px;width:1px;height:23px;background:#bababa;"></div>
<div class="a" style="left:306px;top:146px"><svg width="16" height="15" viewBox="0 0 16 15"><defs><linearGradient id="g47" x1="0" y1="0" x2="0" y2="1"><stop offset="0" stop-color="#ffe45a"/><stop offset="1" stop-color="#f0bd2c"/></linearGradient><linearGradient id="g48" x1="0" y1="0" x2="0" y2="1"><stop offset="0" stop-color="#ffef7a"/><stop offset="0.75" stop-color="#f9d440"/><stop offset="1" stop-color="#fbe070"/></linearGradient></defs><path d="M0.5 14.5 V3.4 L1.4 2.5 H5.6 L7.2 4.3500000000000005 H12.3 L13.0 5.050000000000001 V14.5 Z" fill="url(#g47)" stroke="#bd8a18" stroke-width="1" stroke-linejoin="round"/><rect x="0.5" y="5.85" width="12.5" height="8.65" fill="url(#g48)" stroke="#bd8a18" stroke-width="1"/><path d="M1.2 6.75 H12.3" stroke="#fffbe2" stroke-width="0.9"/><path d="M15.72 5.00 L15.08 6.55 L13.82 6.12 L13.52 6.42 L13.95 7.68 L12.40 8.32 L11.81 7.13 L11.39 7.13 L10.80 8.32 L9.25 7.68 L9.68 6.42 L9.38 6.12 L8.12 6.55 L7.48 5.00 L8.67 4.41 L8.67 3.99 L7.48 3.40 L8.12 1.85 L9.38 2.28 L9.68 1.98 L9.25 0.72 L10.80 0.08 L11.39 1.27 L11.81 1.27 L12.40 0.08 L13.95 0.72 L13.52 1.98 L13.82 2.28 L15.08 1.85 L15.72 3.40 L14.53 3.99 L14.53 4.41 Z" fill="#a9c0e2" stroke="#6f92c8" stroke-width="0.8" stroke-linejoin="round"/><circle cx="11.6" cy="4.2" r="2.10" fill="#ffffff" stroke="#dfe8f5" stroke-width="0.5"/></svg></div>
<div class="t " style="left:328.5px;top:147px;letter-spacing:-0.3px;">New</div>
<div class="a" style="left:359px;top:153px;width:5px;height:1px;background:#000"></div><div class="a" style="left:360px;top:154px;width:3px;height:1px;background:#000"></div><div class="a" style="left:361px;top:155px;width:1px;height:1px;background:#000"></div>
<div class="a grip" style="left:374px;top:147px;height:15px"></div>
<div class="a" style="left:382px;top:147px"><svg width="14" height="14" viewBox="0 0 14 14"><rect x="0.5" y="0.5" width="13" height="13" fill="#f1f5fb" stroke="#4f74a6" stroke-width="1"/><path d="M3 7 H11 M7 3 V11" stroke="#42689a" stroke-width="2"/></svg></div>
<div class="a" style="left:405px;top:147px"><svg width="14" height="14" viewBox="0 0 14 14"><rect x="0.5" y="0.5" width="13" height="13" fill="#e9e9e9" stroke="#cfcfcf" stroke-width="1"/><path d="M3 7 H11" stroke="#c4c4c4" stroke-width="2"/></svg></div>
<div class="a" style="left:428px;top:147px"><svg width="14" height="14" viewBox="0 0 14 14"><rect x="0.5" y="0.5" width="13" height="13" fill="#f1f5fb" stroke="#4f74a6" stroke-width="1"/><path d="M2.7 2.6 L7 11 L11.3 2.6 M4.6 6.3 H9.4" fill="none" stroke="#42689a" stroke-width="1.9" stroke-linejoin="round" stroke-linecap="round"/></svg></div>
<div class="a grip" style="left:544px;top:118px;height:17px"></div>
<div class="a" style="left:549px;top:115px;width:90px;height:23px;background:#fff;"></div>
<div class="a" style="left:553px;top:119px"><svg width="13" height="16" viewBox="0 0 13 16"><defs><linearGradient id="g20" x1="0" y1="0" x2="1" y2="1"><stop offset="0" stop-color="#fde79e"/><stop offset="1" stop-color="#fad774"/></linearGradient></defs><rect x="0.45" y="0.45" width="10.9" height="15.1" rx="0.4" fill="url(#g20)" stroke="#e7bb4c" stroke-width="0.9"/><path d="M11 9.3 Q11 8.7 11.6 8.7 H12.3 Q12.8 8.7 12.8 9.3 V15.6 H11 Z" fill="#fdf0be" stroke="#e7bb4c" stroke-width="0.8"/></svg></div>
<div class="t " style="left:569px;top:119px;letter-spacing:-0.16px;">customer</div>
<div class="a" style="left:627px;top:116px;width:11px;height:21px;background:#f0f0f0;"></div>
<div class="a" style="left:630px;top:125px;width:5px;height:1px;background:#000"></div><div class="a" style="left:631px;top:126px;width:3px;height:1px;background:#000"></div><div class="a" style="left:632px;top:127px;width:1px;height:1px;background:#000"></div>
<div class="a" style="left:643px;top:118px"><svg width="16" height="16" viewBox="0 0 16 16"><defs><linearGradient id="g22" x1="0" y1="0" x2="0" y2="1"><stop offset="0" stop-color="#fff3a0"/><stop offset="0.2" stop-color="#ffe660"/><stop offset="1" stop-color="#f6c93c"/></linearGradient><linearGradient id="g23" x1="0" y1="0" x2="0" y2="1"><stop offset="0" stop-color="#f5cb45"/><stop offset="1" stop-color="#e3ab2c"/></linearGradient><linearGradient id="g24" x1="0" y1="0" x2="0" y2="1"><stop offset="0" stop-color="#8fe482"/><stop offset="1" stop-color="#3ab63a"/></linearGradient></defs><path d="M0.6 15.4 V5.2 L1.4 4.4 H5.4 L6.6 5.8 H12.8 L13.4 6.4 V9.4 H2.6 Z" fill="url(#g23)" stroke="#b98618" stroke-width="1" stroke-linejoin="round"/><path d="M0.7 15.5 L2.5 9 H15.5 L13.7 15.5 Z" fill="url(#g22)" stroke="#bd8a1a" stroke-width="1" stroke-linejoin="round"/><path d="M3.2 9.9 H14.6" stroke="#fffbe0" stroke-width="0.9"/><g transform="translate(3.6,-0.3) scale(0.83,0.98)"><path d="M0.7 5 C1.2 2.4 4 0.3 7.2 0.3 C9.2 0.3 10.8 1 12 2 L14.7 0.3 V7.2 H7.6 L9.9 5.1 C9 4 8 3.4 6.8 3.4 C5 3.4 3.6 4.4 3 5.8 C2.4 6.6 0.5 6.3 0.7 5 Z" fill="url(#g24)" stroke="#1e971e" stroke-width="1" stroke-linejoin="round"/></g></svg></div>
<div class="a" style="left:666px;top:125px;width:5px;height:1px;background:#000"></div><div class="a" style="left:667px;top:126px;width:3px;height:1px;background:#000"></div><div class="a" style="left:668px;top:127px;width:1px;height:1px;background:#000"></div>
<div class="a" style="left:678px;top:119px"><svg width="16" height="15" viewBox="0 0 16 15"><defs><linearGradient id="g25" x1="0" y1="0" x2="0" y2="1"><stop offset="0" stop-color="#ffffff"/><stop offset="1" stop-color="#d4e3f6"/></linearGradient><linearGradient id="g26" x1="0" y1="0" x2="1" y2="0"><stop offset="0" stop-color="#8c8c8c"/><stop offset="0.5" stop-color="#e6e6e6"/><stop offset="1" stop-color="#8c8c8c"/></linearGradient></defs><rect x="0.6" y="0.6" width="14.8" height="13.8" rx="0.6" fill="url(#g25)" stroke="#0c3c8c" stroke-width="1.2"/><rect x="1.2" y="1.2" width="13.6" height="1.5" fill="#3d80dc"/><path d="M3.4 4.7 Q7.6 3.7 11.8 4.7 L8.7 8.5 V12.3 Q7.6 13.1 6.5 12.3 V8.5 Z" fill="url(#g26)" stroke="#6a6a6a" stroke-width="0.9" stroke-linejoin="round"/><path d="M4 5.2 Q7.6 6.2 11.2 5.2" fill="none" stroke="#777" stroke-width="0.7"/></svg></div>
<div class="a" style="left:701px;top:125px;width:5px;height:1px;background:#000"></div><div class="a" style="left:702px;top:126px;width:3px;height:1px;background:#000"></div><div class="a" style="left:703px;top:127px;width:1px;height:1px;background:#000"></div>
<div class="a grip" style="left:716px;top:118px;height:17px"></div>
<div class="a" style="left:723px;top:121px"><svg width="16" height="10" viewBox="0 0 16 10"><defs><linearGradient id="g27" x1="0" y1="0" x2="0" y2="1"><stop offset="0" stop-color="#6eaaf6"/><stop offset="0.5" stop-color="#3b82e6"/><stop offset="1" stop-color="#2a6ad2"/></linearGradient></defs><path d="M0.5 5 L6.3 0.3 V3.1 H15.5 V6.9 H6.3 V9.7 Z" fill="url(#g27)" stroke="#2a66cc" stroke-width="0.9" stroke-linejoin="round"/></svg></div>
<div class="a" style="left:746px;top:125px;width:5px;height:1px;background:#000"></div><div class="a" style="left:747px;top:126px;width:3px;height:1px;background:#000"></div><div class="a" style="left:748px;top:127px;width:1px;height:1px;background:#000"></div>
<div class="a" style="left:758px;top:121px"><svg width="16" height="10" viewBox="0 0 16 10"><defs><linearGradient id="g28" x1="0" y1="0" x2="0" y2="1"><stop offset="0" stop-color="#dedede"/><stop offset="1" stop-color="#c6c6c6"/></linearGradient></defs><path d="M0.5 5 L6.3 0.3 V3.1 H15.5 V6.9 H6.3 V9.7 Z" fill="url(#g28)" stroke="#c2c2c2" stroke-width="0.9" stroke-linejoin="round" transform="translate(16,0) scale(-1,1)"/></svg></div>
<div class="a" style="left:781px;top:125px;width:5px;height:1px;background:#a8a8a8"></div><div class="a" style="left:782px;top:126px;width:3px;height:1px;background:#a8a8a8"></div><div class="a" style="left:783px;top:127px;width:1px;height:1px;background:#a8a8a8"></div>
<div class="a grip" style="left:796px;top:118px;height:17px"></div>
<div class="a" style="left:803px;top:119px"><svg width="16" height="14" viewBox="0 0 16 14"><defs><linearGradient id="g29" x1="0" y1="0" x2="0" y2="1"><stop offset="0" stop-color="#ffe45a"/><stop offset="1" stop-color="#f0bd2c"/></linearGradient><linearGradient id="g30" x1="0" y1="0" x2="0" y2="1"><stop offset="0" stop-color="#ffef7a"/><stop offset="0.75" stop-color="#f9d440"/><stop offset="1" stop-color="#fbe070"/></linearGradient></defs><path d="M0.5 13.5 V1.4 L1.4 0.5 H6.6 L8.2 2.5 H13.8 L14.5 3.2 V13.5 Z" fill="url(#g29)" stroke="#bd8a18" stroke-width="1" stroke-linejoin="round"/><rect x="0.5" y="4.0" width="14" height="9.5" fill="url(#g30)" stroke="#bd8a18" stroke-width="1"/><path d="M1.2 4.9 H13.8" stroke="#fffbe2" stroke-width="0.9"/><path d="M5.3 8 V11.6 H10.6" fill="none" stroke="#1f2d50" stroke-width="1.3"/><path d="M2.8 8.9 L5.3 5.9 L7.8 8.9 Z" fill="#1f2d50"/></svg></div>
<div class="a" style="left:826px;top:119px"><svg width="16" height="14" viewBox="0 0 16 14"><defs><linearGradient id="g33" x1="0" y1="0" x2="0" y2="1"><stop offset="0" stop-color="#ffe45a"/><stop offset="1" stop-color="#f0bd2c"/></linearGradient><linearGradient id="g34" x1="0" y1="0" x2="0" y2="1"><stop offset="0" stop-color="#ffef7a"/><stop offset="0.75" stop-color="#f9d440"/><stop offset="1" stop-color="#fbe070"/></linearGradient></defs><path d="M0.5 13.5 V1.4 L1.4 0.5 H6.6 L8.2 2.5 H13.8 L14.5 3.2 V13.5 Z" fill="url(#g33)" stroke="#bd8a18" stroke-width="1" stroke-linejoin="round"/><rect x="0.5" y="4.0" width="14" height="9.5" fill="url(#g34)" stroke="#bd8a18" stroke-width="1"/><path d="M1.2 4.9 H13.8" stroke="#fffbe2" stroke-width="0.9"/><path d="M9.8 6.3 L6.4 11.8" stroke="#1f2d50" stroke-width="1.4"/></svg></div>
<div class="a" style="left:849px;top:118px"><svg width="16" height="16" viewBox="0 0 16 16"><defs><linearGradient id="g35" x1="0" y1="0" x2="0" y2="1"><stop offset="0" stop-color="#c4d9f4"/><stop offset="1" stop-color="#a9c6ee"/></linearGradient><linearGradient id="g36" x1="0" y1="0" x2="0" y2="1"><stop offset="0" stop-color="#3d7fe8"/><stop offset="1" stop-color="#1f5fd0"/></linearGradient></defs><path d="M1.9 6.8 V15.4 H14.1 V6.8 L8 1.6 Z" fill="url(#g35)" stroke="#4870aa" stroke-width="1"/><path d="M0.6 6.9 L8 0.7 L15.4 6.9" fill="none" stroke="#3b5173" stroke-width="1.7" stroke-linejoin="miter"/><rect x="5" y="8.2" width="6" height="6.8" fill="#ffffff"/><rect x="6.2" y="9.3" width="3.6" height="5.9" fill="url(#g36)"/></svg></div>
<div class="a" style="left:872.5px;top:118px"><svg width="15" height="16" viewBox="0 0 15 16"><defs><linearGradient id="g37" x1="0" y1="0" x2="0" y2="1"><stop offset="0" stop-color="#8fe482"/><stop offset="1" stop-color="#3ab63a"/></linearGradient><linearGradient id="g38" x1="0" y1="0" x2="0" y2="1"><stop offset="0" stop-color="#3ab63a"/><stop offset="1" stop-color="#8fe482"/></linearGradient></defs><g transform="translate(0.000,0.000) scale(1,1)"><path d="M0.7 5 C1.2 2.4 4 0.3 7.2 0.3 C9.2 0.3 10.8 1 12 2 L14.7 0.3 V7.2 H7.6 L9.9 5.1 C9 4 8 3.4 6.8 3.4 C5 3.4 3.6 4.4 3 5.8 C2.4 6.6 0.5 6.3 0.7 5 Z" fill="url(#g37)" stroke="#1e971e" stroke-width="0.90" stroke-linejoin="round"/><path d="M0.7 5 C1.2 2.4 4 0.3 7.2 0.3 C9.2 0.3 10.8 1 12 2 L14.7 0.3 V7.2 H7.6 L9.9 5.1 C9 4 8 3.4 6.8 3.4 C5 3.4 3.6 4.4 3 5.8 C2.4 6.6 0.5 6.3 0.7 5 Z" fill="url(#g38)" stroke="#1e971e" stroke-width="0.90" stroke-linejoin="round" transform="rotate(180 7.5 8)"/></g></svg></div>
<div class="a" style="left:895px;top:115px;width:1px;height:24px;background:#bababa;"></div>
<div class="a" style="left:901px;top:118px"><svg width="16" height="16" viewBox="0 0 16 16"><path d="M0.5 1.5 H7.5 L10.5 4.5 V13.5 H0.5 Z" fill="#fff" stroke="#6f9bd2" stroke-width="1"/><path d="M7.5 1.5 V4.5 H10.5" fill="#dce8f6" stroke="#6f9bd2" stroke-width="0.8"/><path d="M2 5.5 H6.5" stroke="#5585c5" stroke-width="1"/><path d="M2 7.5 H9" stroke="#5585c5" stroke-width="1"/><path d="M2 9.5 H9" stroke="#5585c5" stroke-width="1"/><path d="M2 11.5 H9" stroke="#5585c5" stroke-width="1"/><circle cx="9" cy="7.6" r="4" fill="#e4f0fc" fill-opacity="0.85" stroke="#6a7686" stroke-width="1.2"/><path d="M11.8 10.6 L15.2 14.4" stroke="#3c4452" stroke-width="2" stroke-linecap="round"/></svg></div>
<div class="t " style="left:922.5px;top:119px;letter-spacing:-0.45px;">Find Files</div>
<div class="a" style="left:983px;top:115px;width:1px;height:24px;background:#bababa;"></div>
<div class="a" style="left:989px;top:118px"><svg width="16" height="15" viewBox="0 0 16 15"><defs><linearGradient id="g39" x1="0" y1="0" x2="0" y2="1"><stop offset="0" stop-color="#ffe45a"/><stop offset="1" stop-color="#f0bd2c"/></linearGradient><linearGradient id="g40" x1="0" y1="0" x2="0" y2="1"><stop offset="0" stop-color="#ffef7a"/><stop offset="0.75" stop-color="#f9d440"/><stop offset="1" stop-color="#fbe070"/></linearGradient><linearGradient id="g41" x1="0" y1="0" x2="0" y2="1"><stop offset="0" stop-color="#ffe45a"/><stop offset="1" stop-color="#f0bd2c"/></linearGradient><linearGradient id="g42" x1="0" y1="0" x2="0" y2="1"><stop offset="0" stop-color="#ffef7a"/><stop offset="0.75" stop-color="#f9d440"/><stop offset="1" stop-color="#fbe070"/></linearGradient></defs><path d="M0.5 6.3 V1.4 L1.4 0.5 H3.1 L4.7 1.7999999999999998 H6.8 L7.5 2.5 V6.3 Z" fill="url(#g39)" stroke="#bd8a18" stroke-width="1" stroke-linejoin="round"/><rect x="0.5" y="2.5999999999999996" width="7" height="3.7" fill="url(#g40)" stroke="#bd8a18" stroke-width="1"/><path d="M1.2 3.4999999999999996 H6.8" stroke="#fffbe2" stroke-width="0.9"/><path d="M8.5 14.5 V9.6 L9.4 8.7 H11.1 L12.7 10.0 H14.8 L15.5 10.7 V14.5 Z" fill="url(#g41)" stroke="#bd8a18" stroke-width="1" stroke-linejoin="round"/><rect x="8.5" y="10.799999999999999" width="7" height="3.700000000000001" fill="url(#g42)" stroke="#bd8a18" stroke-width="1"/><path d="M9.2 11.7 H14.8" stroke="#fffbe2" stroke-width="0.9"/><rect x="3" y="8" width="1" height="1" fill="#111"/><rect x="3" y="10" width="1" height="1" fill="#111"/><rect x="3" y="12" width="1" height="1" fill="#111"/><rect x="5" y="12" width="1" height="1" fill="#111"/><rect x="7" y="12" width="1" height="1" fill="#111"/></svg></div>
<div class="a grip" style="left:544px;top:147px;height:15px"></div>
<div class="a" style="left:551px;top:146px"><svg width="16" height="16" viewBox="0 0 16 16"><defs><linearGradient id="g44" x1="1" y1="0" x2="0" y2="1"><stop offset="0" stop-color="#3fb83a"/><stop offset="1" stop-color="#86de78"/></linearGradient></defs><path d="M6.5 0.5 H12.5 L15.5 3.5 V11.5 H6.5 Z" fill="#fff" stroke="#4a7aba" stroke-width="1"/><path d="M12.5 0.5 V3.5 H15.5" fill="#dce8f6" stroke="#4a7aba" stroke-width="0.8"/><path d="M8 4.5 H11.5" stroke="#5585c5" stroke-width="1"/><path d="M8 6.5 H14" stroke="#5585c5" stroke-width="1"/><path d="M8 8.5 H14" stroke="#5585c5" stroke-width="1"/><path d="M8 10.5 H14" stroke="#5585c5" stroke-width="1"/><path d="M0.5 4.5 H6.0 L9.0 7.5 V15.5 H0.5 Z" fill="#fff" stroke="#4a7aba" stroke-width="1"/><path d="M6.0 4.5 V7.5 H9.0" fill="#dce8f6" stroke="#4a7aba" stroke-width="0.8"/><path d="M2 8.5 H5.0" stroke="#5585c5" stroke-width="1"/><path d="M2 10.5 H7.5" stroke="#5585c5" stroke-width="1"/><path d="M2 12.5 H7.5" stroke="#5585c5" stroke-width="1"/><path d="M2 14.5 H7.5" stroke="#5585c5" stroke-width="1"/><path d="M7 8.4 L9.4 10.6 L13.4 6.8 L15.6 9.2 L11.8 13 L14.2 15.6 H7 Z" fill="url(#g44)" stroke="#128a12" stroke-width="0.9" stroke-linejoin="round"/></svg></div>
<div class="t " style="left:572px;top:147px;letter-spacing:0.06px;">Download</div>
<div class="a" style="left:639px;top:153px;width:5px;height:1px;background:#000"></div><div class="a" style="left:640px;top:154px;width:3px;height:1px;background:#000"></div><div class="a" style="left:641px;top:155px;width:1px;height:1px;background:#000"></div>
<div class="a" style="left:651px;top:143px;width:1px;height:23px;background:#bababa;"></div>
<div class="a" style="left:657px;top:146px"><svg width="16" height="16" viewBox="0 0 16 16"><defs><linearGradient id="g45" x1="0" y1="0" x2="0" y2="1"><stop offset="0" stop-color="#ffffff"/><stop offset="1" stop-color="#dbe7f6"/></linearGradient></defs><path d="M0.5 1.5 H8.6 L12 4.8 V15.5 H0.5 Z" fill="url(#g45)" stroke="#5c86c0" stroke-width="1"/><path d="M8.6 1.5 V4.8 H12" fill="#e6eefa" stroke="#5c86c0" stroke-width="0.8"/><g transform="translate(14.6,1.6) rotate(130.76)"><rect x="0" y="-1.4" width="2.4" height="2.8" fill="#e0383e" stroke="#a8242a" stroke-width="0.5"/><rect x="2.4" y="-1.4" width="9.315351775261318" height="2.8" fill="#f6c032" stroke="#b88616" stroke-width="0.6"/><path d="M11.715351775261318 -1.4 L14.415351775261318 -0.45 L15.315351775261318 0 L14.415351775261318 0.45 L11.715351775261318 1.4 Z" fill="#f0d8a8" stroke="#b88616" stroke-width="0.5"/><path d="M14.015351775261317 -0.6 L15.315351775261318 0 L14.015351775261317 0.6 Z" fill="#333"/></g></svg></div>
<div class="t " style="left:678.5px;top:147px;letter-spacing:-0.2px;">Edit</div>
<div class="a" style="left:708px;top:153px;width:5px;height:1px;background:#000"></div><div class="a" style="left:709px;top:154px;width:3px;height:1px;background:#000"></div><div class="a" style="left:710px;top:155px;width:1px;height:1px;background:#000"></div>
<div class="a" style="left:720.5px;top:147px"><svg width="16" height="15" viewBox="0 0 16 15"><path d="M2.6 2.4 L12.4 12 M12.4 2.4 L2.6 12" stroke="#b01818" stroke-width="3.6" stroke-linecap="round"/><path d="M2.6 2.4 L12.4 12 M12.4 2.4 L2.6 12" stroke="#e02a2c" stroke-width="2.3" stroke-linecap="round"/></svg></div>
<div class="a" style="left:743px;top:146px"><svg width="16" height="16" viewBox="0 0 16 16"><rect x="0.5" y="8.5" width="15" height="7" fill="#f2f6fc" stroke="#5c86c0" stroke-width="1"/><path d="M2.6 10.6 L5.4 13.6 M5.4 10.6 L2.6 13.6" stroke="#3c68a8" stroke-width="1"/><g transform="translate(14.4,1.4) rotate(121.72)"><rect x="0" y="-1.3" width="2.4" height="2.6" fill="#e0383e" stroke="#a8242a" stroke-width="0.5"/><rect x="2.4" y="-1.3" width="6.932130528261769" height="2.6" fill="#f6c032" stroke="#b88616" stroke-width="0.6"/><path d="M9.33213052826177 -1.3 L12.032130528261769 -0.45 L12.93213052826177 0 L12.032130528261769 0.45 L9.33213052826177 1.3 Z" fill="#f0d8a8" stroke="#b88616" stroke-width="0.5"/><path d="M11.632130528261769 -0.6 L12.93213052826177 0 L11.632130528261769 0.6 Z" fill="#333"/></g></svg></div>
<div class="a" style="left:766px;top:146px"><svg width="16" height="16" viewBox="0 0 16 16"><defs><linearGradient id="g46" x1="0" y1="0" x2="0" y2="1"><stop offset="0" stop-color="#ffffff"/><stop offset="1" stop-color="#dbe7f6"/></linearGradient></defs><path d="M0.5 0.5 H7 L10.5 4 V12.5 H0.5 Z" fill="url(#g46)" stroke="#6a92c8" stroke-width="1"/><path d="M7 0.5 V4 H10.5" fill="#e6eefa" stroke="#6a92c8" stroke-width="0.8"/><rect x="7.5" y="7.5" width="8" height="8" fill="#f4f8fd" stroke="#5c86c0" stroke-width="1"/><path d="M9 11.4 L11 13.6 L14.2 8.8" fill="none" stroke="#2a9a2a" stroke-width="1.7"/></svg></div>
<div class="t " style="left:787px;top:147px;">Properties</div>
<div class="a" style="left:855px;top:143px;width:1px;height:23px;background:#bababa;"></div>
<div class="a" style="left:861px;top:146px"><svg width="16" height="15" viewBox="0 0 16 15"><defs><linearGradient id="g47" x1="0" y1="0" x2="0" y2="1"><stop offset="0" stop-color="#ffe45a"/><stop offset="1" stop-color="#f0bd2c"/></linearGradient><linearGradient id="g48" x1="0" y1="0" x2="0" y2="1"><stop offset="0" stop-color="#ffef7a"/><stop offset="0.75" stop-color="#f9d440"/><stop offset="1" stop-color="#fbe070"/></linearGradient></defs><path d="M0.5 14.5 V3.4 L1.4 2.5 H5.6 L7.2 4.3500000000000005 H12.3 L13.0 5.050000000000001 V14.5 Z" fill="url(#g47)" stroke="#bd8a18" stroke-width="1" stroke-linejoin="round"/><rect x="0.5" y="5.85" width="12.5" height="8.65" fill="url(#g48)" stroke="#bd8a18" stroke-width="1"/><path d="M1.2 6.75 H12.3" stroke="#fffbe2" stroke-width="0.9"/><path d="M15.72 5.00 L15.08 6.55 L13.82 6.12 L13.52 6.42 L13.95 7.68 L12.40 8.32 L11.81 7.13 L11.39 7.13 L10.80 8.32 L9.25 7.68 L9.68 6.42 L9.38 6.12 L8.12 6.55 L7.48 5.00 L8.67 4.41 L8.67 3.99 L7.48 3.40 L8.12 1.85 L9.38 2.28 L9.68 1.98 L9.25 0.72 L10.80 0.08 L11.39 1.27 L11.81 1.27 L12.40 0.08 L13.95 0.72 L13.52 1.98 L13.82 2.28 L15.08 1.85 L15.72 3.40 L14.53 3.99 L14.53 4.41 Z" fill="#a9c0e2" stroke="#6f92c8" stroke-width="0.8" stroke-linejoin="round"/><circle cx="11.6" cy="4.2" r="2.10" fill="#ffffff" stroke="#dfe8f5" stroke-width="0.5"/></svg></div>
<div class="t " style="left:883.5px;top:147px;letter-spacing:-0.3px;">New</div>
<div class="a" style="left:914px;top:153px;width:5px;height:1px;background:#000"></div><div class="a" style="left:915px;top:154px;width:3px;height:1px;background:#000"></div><div class="a" style="left:916px;top:155px;width:1px;height:1px;background:#000"></div>
<div class="a grip" style="left:929px;top:147px;height:15px"></div>
<div class="a" style="left:937px;top:147px"><svg width="14" height="14" viewBox="0 0 14 14"><rect x="0.5" y="0.5" width="13" height="13" fill="#f1f5fb" stroke="#4f74a6" stroke-width="1"/><path d="M3 7 H11 M7 3 V11" stroke="#42689a" stroke-width="2"/></svg></div>
<div class="a" style="left:960px;top:147px"><svg width="14" height="14" viewBox="0 0 14 14"><rect x="0.5" y="0.5" width="13" height="13" fill="#f1f5fb" stroke="#4f74a6" stroke-width="1"/><path d="M3 7 H11" stroke="#42689a" stroke-width="2"/></svg></div>
<div class="a" style="left:983px;top:147px"><svg width="14" height="14" viewBox="0 0 14 14"><rect x="0.5" y="0.5" width="13" height="13" fill="#f1f5fb" stroke="#4f74a6" stroke-width="1"/><path d="M2.7 2.6 L7 11 L11.3 2.6 M4.6 6.3 H9.4" fill="none" stroke="#42689a" stroke-width="1.9" stroke-linejoin="round" stroke-linecap="round"/></svg></div>
<div class="a" style="left:1px;top:168px;width:534px;height:23px;background:#99b4d1;"></div>
<div class="t " style="left:6.4px;top:172px;letter-spacing:0.21px;">D:\workplace\android_code\</div>
<div class="a" style="left:540px;top:168px;width:535px;height:23px;background:#bfcddb;"></div>
<div class="t " style="left:545px;top:172px;letter-spacing:0.33px;">/customer/</div>
<div class="a" style="left:1px;top:191px;width:532px;height:456px;background:#fff;border:1px solid #828790"></div>
<div class="a" style="left:540px;top:191px;width:533px;height:456px;background:#fff;border:1px solid #828790"></div>
<div class="a" style="left:152px;top:193px;width:1px;height:24px;background:#e2e2e2;"></div>
<div class="a" style="left:152px;top:217px;width:1px;height:431px;background:#ebf2fb;"></div>
<div class="a" style="left:296px;top:193px;width:1px;height:24px;background:#e2e2e2;"></div>
<div class="a" style="left:296px;top:217px;width:1px;height:431px;background:#ebf2fb;"></div>
<div class="a" style="left:446px;top:193px;width:1px;height:24px;background:#e2e2e2;"></div>
<div class="a" style="left:446px;top:217px;width:1px;height:431px;background:#ebf2fb;"></div>
<div class="a" style="left:4px;top:217px;width:1px;height:431px;background:#cfe0f6;"></div>
<svg class="a" style="left:74.5px;top:193px" width="9" height="5" viewBox="0 0 9 5"><path d="M0.7 4.6 L4.5 0.8 L8.3 4.6" stroke="#5a5a5a" stroke-width="1" fill="none"/></svg>
<div class="t " style="left:9px;top:197px;">Name</div>
<div class="t " style="left:200px;top:197px;width:90.5px;text-align:right;transform:scaleX(0.862);transform-origin:100% 0;">Size</div>
<div class="t " style="left:303px;top:197px;letter-spacing:-0.3px;">Changed</div>
<div class="a" style="left:9px;top:219px"><svg width="13" height="16" viewBox="0 0 13 16"><defs><linearGradient id="g21" x1="0" y1="0" x2="1" y2="1"><stop offset="0" stop-color="#fde79e"/><stop offset="1" stop-color="#fad774"/></linearGradient></defs><rect x="0.45" y="0.45" width="10.9" height="15.1" rx="0.4" fill="url(#g21)" stroke="#e7bb4c" stroke-width="0.9"/><path d="M11 9.3 Q11 8.7 11.6 8.7 H12.3 Q12.8 8.7 12.8 9.3 V15.6 H11 Z" fill="#fdf0be" stroke="#e7bb4c" stroke-width="0.8"/><path d="M4.2 6.2 V10.7 H8.9" fill="none" stroke="#2a2e38" stroke-width="1.25"/><path d="M1.9 8.5 L4.2 5.8 L6.5 8.5" fill="none" stroke="#2a2e38" stroke-width="1.25"/></svg></div>
<div class="t " style="left:25.5px;top:220px;">..</div>
<div class="t " style="left:303.4px;top:220px;">2025/7/15</div>
<div class="t " style="left:370.8px;top:220px;letter-spacing:-0.5px;">16:35:35</div>
<div class="a" style="left:9px;top:240px"><svg width="13" height="16" viewBox="0 0 13 16"><defs><linearGradient id="g20" x1="0" y1="0" x2="1" y2="1"><stop offset="0" stop-color="#fde79e"/><stop offset="1" stop-color="#fad774"/></linearGradient></defs><rect x="0.45" y="0.45" width="10.9" height="15.1" rx="0.4" fill="url(#g20)" stroke="#e7bb4c" stroke-width="0.9"/><path d="M11 9.3 Q11 8.7 11.6 8.7 H12.3 Q12.8 8.7 12.8 9.3 V15.6 H11 Z" fill="#fdf0be" stroke="#e7bb4c" stroke-width="0.8"/></svg></div>
<div class="t " style="left:25.5px;top:241px;letter-spacing:0.18px;">android-12</div>
<div class="t " style="left:303.4px;top:241px;">2025/4/22</div>
<div class="t " style="left:370.8px;top:241px;letter-spacing:-0.5px;">21:23:43</div>
<div class="a" style="left:9px;top:261px"><svg width="13" height="16" viewBox="0 0 13 16"><defs><linearGradient id="g20" x1="0" y1="0" x2="1" y2="1"><stop offset="0" stop-color="#fde79e"/><stop offset="1" stop-color="#fad774"/></linearGradient></defs><rect x="0.45" y="0.45" width="10.9" height="15.1" rx="0.4" fill="url(#g20)" stroke="#e7bb4c" stroke-width="0.9"/><path d="M11 9.3 Q11 8.7 11.6 8.7 H12.3 Q12.8 8.7 12.8 9.3 V15.6 H11 Z" fill="#fdf0be" stroke="#e7bb4c" stroke-width="0.8"/></svg></div>
<div class="t " style="left:25.5px;top:262px;letter-spacing:-0.09px;">manifest</div>
<div class="t " style="left:303.4px;top:262px;">2025/4/22</div>
<div class="t " style="left:370.8px;top:262px;letter-spacing:-0.5px;">19:48:30</div>
<div class="a" style="left:9px;top:282px"><svg width="12" height="16" viewBox="0 0 12 16"><defs><linearGradient id="g50" x1="0" y1="0" x2="0" y2="1"><stop offset="0" stop-color="#ffffff"/><stop offset="1" stop-color="#f1f1f1"/></linearGradient></defs><path d="M0.5 0.5 H8.4 L11.5 3.6 V15.5 H0.5 Z" fill="url(#g50)" stroke="#8e8e8e" stroke-width="1"/><path d="M8.4 0.5 V3.6 H11.5" fill="#fafafa" stroke="#8e8e8e" stroke-width="0.9"/><path d="M2.2 3.5 H7.2" stroke="#9a9a9a" stroke-width="1"/><path d="M2.2 5.5 H9.8" stroke="#9a9a9a" stroke-width="1"/><path d="M2.2 7.5 H9.8" stroke="#9a9a9a" stroke-width="1"/><path d="M2.2 9.5 H9.8" stroke="#9a9a9a" stroke-width="1"/><path d="M2.2 11.5 H9.8" stroke="#9a9a9a" stroke-width="1"/><path d="M2.2 13.5 H9.8" stroke="#9a9a9a" stroke-width="1"/></svg></div>
<div class="t " style="left:25.5px;top:283px;">atest.log</div>
<div class="t " style="left:200px;top:283px;width:88.2px;text-align:right;letter-spacing:-0.3px;">88 KB</div>
<div class="t " style="left:303.4px;top:283px;">2025/6/2</div>
<div class="t " style="left:364.3px;top:283px;letter-spacing:-0.5px;">1:34:26</div>
<div class="a" style="left:24px;top:281px;width:52px;height:17px;border:1px dotted #000"></div>
<div class="a" style="left:691px;top:193px;width:1px;height:24px;background:#e2e2e2;"></div>
<div class="a" style="left:691px;top:217px;width:1px;height:431px;background:#ebf2fb;"></div>
<div class="a" style="left:761px;top:193px;width:1px;height:24px;background:#e2e2e2;"></div>
<div class="a" style="left:761px;top:217px;width:1px;height:431px;background:#ebf2fb;"></div>
<div class="a" style="left:911px;top:193px;width:1px;height:24px;background:#e2e2e2;"></div>
<div class="a" style="left:911px;top:217px;width:1px;height:431px;background:#ebf2fb;"></div>
<div class="a" style="left:990px;top:193px;width:1px;height:24px;background:#e2e2e2;"></div>
<div class="a" style="left:990px;top:217px;width:1px;height:431px;background:#ebf2fb;"></div>
<div class="a" style="left:1052px;top:193px;width:1px;height:24px;background:#e2e2e2;"></div>
<div class="a" style="left:1052px;top:217px;width:1px;height:431px;background:#ebf2fb;"></div>
<div class="a" style="left:543px;top:217px;width:1px;height:431px;background:#cfe0f6;"></div>
<svg class="a" style="left:613.5px;top:193px" width="9" height="5" viewBox="0 0 9 5"><path d="M0.7 4.6 L4.5 0.8 L8.3 4.6" stroke="#5a5a5a" stroke-width="1" fill="none"/></svg>
<div class="t " style="left:548px;top:197px;">Name</div>
<div class="t " style="left:700px;top:197px;width:55.5px;text-align:right;transform:scaleX(0.862);transform-origin:100% 0;">Size</div>
<div class="t " style="left:768px;top:197px;letter-spacing:-0.3px;">Changed</div>
<div class="t " style="left:918.5px;top:197px;letter-spacing:-0.44px;">Rights</div>
<div class="t " style="left:997.5px;top:197px;letter-spacing:-0.32px;">Owner</div>
<div class="a" style="left:548px;top:219px"><svg width="13" height="16" viewBox="0 0 13 16"><defs><linearGradient id="g20" x1="0" y1="0" x2="1" y2="1"><stop offset="0" stop-color="#fde79e"/><stop offset="1" stop-color="#fad774"/></linearGradient></defs><rect x="0.45" y="0.45" width="10.9" height="15.1" rx="0.4" fill="url(#g20)" stroke="#e7bb4c" stroke-width="0.9"/><path d="M11 9.3 Q11 8.7 11.6 8.7 H12.3 Q12.8 8.7 12.8 9.3 V15.6 H11 Z" fill="#fdf0be" stroke="#e7bb4c" stroke-width="0.8"/></svg></div>
<div class="t " style="left:564.5px;top:220px;">tools</div>
<div class="t " style="left:768px;top:220px;">2025/7/7</div>
<div class="t " style="left:918.5px;top:220px;letter-spacing:0.12px;">rwxr-xr-x</div>
<div class="t " style="left:997.5px;top:220px;">91951<span style="letter-spacing:-1.05px">...</span></div>
<div class="a" style="left:548px;top:240px"><svg width="13" height="16" viewBox="0 0 13 16"><defs><linearGradient id="g20" x1="0" y1="0" x2="1" y2="1"><stop offset="0" stop-color="#fde79e"/><stop offset="1" stop-color="#fad774"/></linearGradient></defs><rect x="0.45" y="0.45" width="10.9" height="15.1" rx="0.4" fill="url(#g20)" stroke="#e7bb4c" stroke-width="0.9"/><path d="M11 9.3 Q11 8.7 11.6 8.7 H12.3 Q12.8 8.7 12.8 9.3 V15.6 H11 Z" fill="#fdf0be" stroke="#e7bb4c" stroke-width="0.8"/></svg></div>
<div class="t " style="left:564.5px;top:241px;">vendor</div>
<div class="t " style="left:768px;top:241px;">2025/1/1 0:01</div>
<div class="t " style="left:918.5px;top:241px;letter-spacing:0.12px;">rwxr-xr-x</div>
<div class="t " style="left:997.5px;top:241px;letter-spacing:0.52px;">root</div>
<div class="a" style="left:548px;top:261px"><svg width="13" height="16" viewBox="0 0 13 16"><defs><linearGradient id="g20" x1="0" y1="0" x2="1" y2="1"><stop offset="0" stop-color="#fde79e"/><stop offset="1" stop-color="#fad774"/></linearGradient></defs><rect x="0.45" y="0.45" width="10.9" height="15.1" rx="0.4" fill="url(#g20)" stroke="#e7bb4c" stroke-width="0.9"/><path d="M11 9.3 Q11 8.7 11.6 8.7 H12.3 Q12.8 8.7 12.8 9.3 V15.6 H11 Z" fill="#fdf0be" stroke="#e7bb4c" stroke-width="0.8"/></svg></div>
<div class="t " style="left:564.5px;top:262px;">wifi</div>
<div class="t " style="left:768px;top:262px;">2025/1/1 3:18</div>
<div class="t " style="left:918.5px;top:262px;letter-spacing:0.12px;">rwxr-xr-x</div>
<div class="t " style="left:997.5px;top:262px;">91951<span style="letter-spacing:-1.05px">...</span></div>
<div class="a" style="left:548px;top:282px"><svg width="12" height="16" viewBox="0 0 12 16"><defs><linearGradient id="g50" x1="0" y1="0" x2="0" y2="1"><stop offset="0" stop-color="#ffffff"/><stop offset="1" stop-color="#f1f1f1"/></linearGradient></defs><path d="M0.5 0.5 H8.4 L11.5 3.6 V15.5 H0.5 Z" fill="url(#g50)" stroke="#8e8e8e" stroke-width="1"/><path d="M8.4 0.5 V3.6 H11.5" fill="#fafafa" stroke="#8e8e8e" stroke-width="0.9"/><path d="M2.2 3.5 H7.2" stroke="#9a9a9a" stroke-width="1"/><path d="M2.2 5.5 H9.8" stroke="#9a9a9a" stroke-width="1"/><path d="M2.2 7.5 H9.8" stroke="#9a9a9a" stroke-width="1"/><path d="M2.2 9.5 H9.8" stroke="#9a9a9a" stroke-width="1"/><path d="M2.2 11.5 H9.8" stroke="#9a9a9a" stroke-width="1"/><path d="M2.2 13.5 H9.8" stroke="#9a9a9a" stroke-width="1"/></svg></div>
<div class="t " style="left:564.5px;top:283px;">atest.log</div>
<div class="t " style="left:700px;top:283px;width:54.3px;text-align:right;letter-spacing:-0.3px;">88 KB</div>
<div class="t " style="left:768px;top:283px;">2025/6/1</div>
<div class="t " style="left:918.5px;top:283px;letter-spacing:0.4px;">rw-r--r--</div>
<div class="t " style="left:997.5px;top:283px;letter-spacing:0.52px;">root</div>
<div class="a" style="left:548px;top:303px"><svg width="12" height="16" viewBox="0 0 12 16"><defs><linearGradient id="g50" x1="0" y1="0" x2="0" y2="1"><stop offset="0" stop-color="#ffffff"/><stop offset="1" stop-color="#f1f1f1"/></linearGradient></defs><path d="M0.5 0.5 H8.4 L11.5 3.6 V15.5 H0.5 Z" fill="url(#g50)" stroke="#8e8e8e" stroke-width="1"/><path d="M8.4 0.5 V3.6 H11.5" fill="#fafafa" stroke="#8e8e8e" stroke-width="0.9"/><path d="M2.2 3.5 H7.2" stroke="#9a9a9a" stroke-width="1"/><path d="M2.2 5.5 H9.8" stroke="#9a9a9a" stroke-width="1"/><path d="M2.2 7.5 H9.8" stroke="#9a9a9a" stroke-width="1"/><path d="M2.2 9.5 H9.8" stroke="#9a9a9a" stroke-width="1"/><path d="M2.2 11.5 H9.8" stroke="#9a9a9a" stroke-width="1"/><path d="M2.2 13.5 H9.8" stroke="#9a9a9a" stroke-width="1"/></svg></div>
<div class="t " style="left:564.5px;top:304px;letter-spacing:-0.07px;">atest_logcat.log</div>
<div class="t " style="left:700px;top:304px;width:54.3px;text-align:right;letter-spacing:-0.3px;">1,723 KB</div>
<div class="t " style="left:768px;top:304px;">2025/6/1</div>
<div class="t " style="left:918.5px;top:304px;letter-spacing:0.4px;">rw-r--r--</div>
<div class="t " style="left:997.5px;top:304px;letter-spacing:0.52px;">root</div>
<div class="a" style="left:548px;top:325px"><svg width="11" height="14" viewBox="0 0 11 14"><path d="M0.5 0.5 H7.6 L10.5 3.4 V13.5 H0.5 Z" fill="#fff" stroke="#cfcfcf" stroke-width="1"/><path d="M7.6 0.5 V3.4 H10.5" fill="#f6f6f6" stroke="#cfcfcf" stroke-width="0.9"/><text x="5.3" y="9.9" font-family="Liberation Sans" font-size="7" text-anchor="middle" fill="#aeab4e" letter-spacing="0.6">{}</text></svg></div>
<div class="t " style="left:564.5px;top:325px;">config.json</div>
<div class="t " style="left:700px;top:325px;width:54.3px;text-align:right;letter-spacing:-0.3px;">63 KB</div>
<div class="t " style="left:768px;top:325px;">2025/7/7</div>
<div class="t " style="left:918.5px;top:325px;letter-spacing:0.12px;">rwxr-xr-x</div>
<div class="t " style="left:997.5px;top:325px;">91951<span style="letter-spacing:-1.05px">...</span></div>
<div class="a" style="left:546px;top:343px;width:144px;height:21px;background:#d9d9d9;"></div>
<div class="a" style="left:548px;top:345px"><svg width="12" height="16" viewBox="0 0 12 16"><defs><linearGradient id="g49" x1="0" y1="0" x2="0" y2="1"><stop offset="0" stop-color="#ffffff"/><stop offset="1" stop-color="#f1f1f1"/></linearGradient></defs><path d="M0.5 0.5 H8.4 L11.5 3.6 V15.5 H0.5 Z" fill="url(#g49)" stroke="#8e8e8e" stroke-width="1"/><path d="M8.4 0.5 V3.6 H11.5" fill="#fafafa" stroke="#8e8e8e" stroke-width="0.9"/></svg></div>
<div class="t " style="left:564.5px;top:346px;">default.xml</div>
<div class="t " style="left:700px;top:346px;width:54.3px;text-align:right;letter-spacing:-0.3px;">108 KB</div>
<div class="t " style="left:768px;top:346px;">2025/4/22</div>
<div class="t " style="left:918.5px;top:346px;letter-spacing:0.4px;">rw-r--r--</div>
<div class="t " style="left:997.5px;top:346px;letter-spacing:0.52px;">root</div>
<div class="a" style="left:546px;top:367px"><svg width="16" height="12" viewBox="0 0 16 12"><rect x="0.5" y="0.5" width="15" height="11" fill="#fff" stroke="#8a8a8a" stroke-width="1"/><rect x="1" y="1" width="14" height="1.6" fill="#a8a8a8"/><circle cx="6" cy="6.4" r="2.3" fill="none" stroke="#8a9098" stroke-width="1.2" stroke-dasharray="1.1 0.7"/><circle cx="6" cy="6.4" r="0.8" fill="#c8ccd2"/><circle cx="10.2" cy="8.2" r="1.6" fill="#cfe4fa" stroke="#7fb0e8" stroke-width="0.9"/></svg></div>
<div class="t " style="left:564.5px;top:367px;">demo.sh</div>
<div class="t " style="left:700px;top:367px;width:54.3px;text-align:right;letter-spacing:-0.3px;">3 KB</div>
<div class="t " style="left:768px;top:367px;">2025/7/7</div>
<div class="t " style="left:918.5px;top:367px;letter-spacing:0.12px;">rwxr-xr-x</div>
<div class="t " style="left:997.5px;top:367px;">91951<span style="letter-spacing:-1.05px">...</span></div>
<div class="a" style="left:548px;top:387px"><svg width="12" height="16" viewBox="0 0 12 16"><defs><linearGradient id="g49" x1="0" y1="0" x2="0" y2="1"><stop offset="0" stop-color="#ffffff"/><stop offset="1" stop-color="#f1f1f1"/></linearGradient></defs><path d="M0.5 0.5 H8.4 L11.5 3.6 V15.5 H0.5 Z" fill="url(#g49)" stroke="#8e8e8e" stroke-width="1"/><path d="M8.4 0.5 V3.6 H11.5" fill="#fafafa" stroke="#8e8e8e" stroke-width="0.9"/></svg></div>
<div class="t " style="left:564.5px;top:388px;letter-spacing:0.55px;">gdb</div>
<div class="t " style="left:700px;top:388px;width:54.3px;text-align:right;letter-spacing:-0.3px;">6,295 KB</div>
<div class="t " style="left:768px;top:388px;">2025/7/7</div>
<div class="t " style="left:918.5px;top:388px;letter-spacing:0.12px;">rwxr-xr-x</div>
<div class="t " style="left:997.5px;top:388px;">91951<span style="letter-spacing:-1.05px">...</span></div>
<div class="a" style="left:548px;top:408px"><svg width="12" height="16" viewBox="0 0 12 16"><defs><linearGradient id="g49" x1="0" y1="0" x2="0" y2="1"><stop offset="0" stop-color="#ffffff"/><stop offset="1" stop-color="#f1f1f1"/></linearGradient></defs><path d="M0.5 0.5 H8.4 L11.5 3.6 V15.5 H0.5 Z" fill="url(#g49)" stroke="#8e8e8e" stroke-width="1"/><path d="M8.4 0.5 V3.6 H11.5" fill="#fafafa" stroke="#8e8e8e" stroke-width="0.9"/></svg></div>
<div class="t " style="left:564.5px;top:409px;letter-spacing:0.3px;">htop</div>
<div class="t " style="left:700px;top:409px;width:54.3px;text-align:right;letter-spacing:-0.3px;">384 KB</div>
<div class="t " style="left:768px;top:409px;">2025/7/7</div>
<div class="t " style="left:918.5px;top:409px;letter-spacing:0.12px;">rwxr-xr-x</div>
<div class="t " style="left:997.5px;top:409px;">91951<span style="letter-spacing:-1.05px">...</span></div>
<div class="a" style="left:548px;top:429px"><svg width="12" height="16" viewBox="0 0 12 16"><defs><linearGradient id="g49" x1="0" y1="0" x2="0" y2="1"><stop offset="0" stop-color="#ffffff"/><stop offset="1" stop-color="#f1f1f1"/></linearGradient></defs><path d="M0.5 0.5 H8.4 L11.5 3.6 V15.5 H0.5 Z" fill="url(#g49)" stroke="#8e8e8e" stroke-width="1"/><path d="M8.4 0.5 V3.6 H11.5" fill="#fafafa" stroke="#8e8e8e" stroke-width="0.9"/></svg></div>
<div class="t " style="left:564.5px;top:430px;letter-spacing:-0.3px;">i2c_read_write</div>
<div class="t " style="left:700px;top:430px;width:54.3px;text-align:right;letter-spacing:-0.3px;">15 KB</div>
<div class="t " style="left:768px;top:430px;">2025/7/7</div>
<div class="t " style="left:918.5px;top:430px;letter-spacing:0.12px;">rwxr-xr-x</div>
<div class="t " style="left:997.5px;top:430px;">91951<span style="letter-spacing:-1.05px">...</span></div>
<div class="a" style="left:548px;top:450px"><svg width="12" height="16" viewBox="0 0 12 16"><defs><linearGradient id="g49" x1="0" y1="0" x2="0" y2="1"><stop offset="0" stop-color="#ffffff"/><stop offset="1" stop-color="#f1f1f1"/></linearGradient></defs><path d="M0.5 0.5 H8.4 L11.5 3.6 V15.5 H0.5 Z" fill="url(#g49)" stroke="#8e8e8e" stroke-width="1"/><path d="M8.4 0.5 V3.6 H11.5" fill="#fafafa" stroke="#8e8e8e" stroke-width="0.9"/></svg></div>
<div class="t " style="left:564.5px;top:451px;">iperf3</div>
<div class="t " style="left:700px;top:451px;width:54.3px;text-align:right;letter-spacing:-0.3px;">125 KB</div>
<div class="t " style="left:768px;top:451px;">2025/7/7</div>
<div class="t " style="left:918.5px;top:451px;letter-spacing:0.12px;">rwxr-xr-x</div>
<div class="t " style="left:997.5px;top:451px;">91951<span style="letter-spacing:-1.05px">...</span></div>
<div class="a" style="left:548px;top:471px"><svg width="12" height="16" viewBox="0 0 12 16"><defs><linearGradient id="g49" x1="0" y1="0" x2="0" y2="1"><stop offset="0" stop-color="#ffffff"/><stop offset="1" stop-color="#f1f1f1"/></linearGradient></defs><path d="M0.5 0.5 H8.4 L11.5 3.6 V15.5 H0.5 Z" fill="url(#g49)" stroke="#8e8e8e" stroke-width="1"/><path d="M8.4 0.5 V3.6 H11.5" fill="#fafafa" stroke="#8e8e8e" stroke-width="0.9"/></svg></div>
<div class="t " style="left:564.5px;top:472px;">resolv.conf</div>
<div class="t " style="left:700px;top:472px;width:54.3px;text-align:right;letter-spacing:-0.3px;">1 KB</div>
<div class="t " style="left:768px;top:472px;">2025/1/1 19:04</div>
<div class="t " style="left:918.5px;top:472px;letter-spacing:0.4px;">rw-r--r--</div>
<div class="t " style="left:997.5px;top:472px;letter-spacing:0.52px;">root</div>
<div class="a" style="left:548px;top:492px"><svg width="12" height="16" viewBox="0 0 12 16"><defs><linearGradient id="g49" x1="0" y1="0" x2="0" y2="1"><stop offset="0" stop-color="#ffffff"/><stop offset="1" stop-color="#f1f1f1"/></linearGradient></defs><path d="M0.5 0.5 H8.4 L11.5 3.6 V15.5 H0.5 Z" fill="url(#g49)" stroke="#8e8e8e" stroke-width="1"/><path d="M8.4 0.5 V3.6 H11.5" fill="#fafafa" stroke="#8e8e8e" stroke-width="0.9"/></svg></div>
<div class="t " style="left:564.5px;top:493px;letter-spacing:-0.2px;">riu_r</div>
<div class="t " style="left:700px;top:493px;width:54.3px;text-align:right;letter-spacing:-0.3px;">11 KB</div>
<div class="t " style="left:768px;top:493px;">2025/7/7</div>
<div class="t " style="left:918.5px;top:493px;letter-spacing:0.12px;">rwxr-xr-x</div>
<div class="t " style="left:997.5px;top:493px;">91951<span style="letter-spacing:-1.05px">...</span></div>
<div class="a" style="left:548px;top:513px"><svg width="12" height="16" viewBox="0 0 12 16"><defs><linearGradient id="g49" x1="0" y1="0" x2="0" y2="1"><stop offset="0" stop-color="#ffffff"/><stop offset="1" stop-color="#f1f1f1"/></linearGradient></defs><path d="M0.5 0.5 H8.4 L11.5 3.6 V15.5 H0.5 Z" fill="url(#g49)" stroke="#8e8e8e" stroke-width="1"/><path d="M8.4 0.5 V3.6 H11.5" fill="#fafafa" stroke="#8e8e8e" stroke-width="0.9"/></svg></div>
<div class="t " style="left:564.5px;top:514px;letter-spacing:-0.45px;">riu_w</div>
<div class="t " style="left:700px;top:514px;width:54.3px;text-align:right;letter-spacing:-0.3px;">11 KB</div>
<div class="t " style="left:768px;top:514px;">2025/7/7</div>
<div class="t " style="left:918.5px;top:514px;letter-spacing:0.12px;">rwxr-xr-x</div>
<div class="t " style="left:997.5px;top:514px;">91951<span style="letter-spacing:-1.05px">...</span></div>
<div class="a" style="left:548px;top:534px"><svg width="12" height="16" viewBox="0 0 12 16"><defs><linearGradient id="g49" x1="0" y1="0" x2="0" y2="1"><stop offset="0" stop-color="#ffffff"/><stop offset="1" stop-color="#f1f1f1"/></linearGradient></defs><path d="M0.5 0.5 H8.4 L11.5 3.6 V15.5 H0.5 Z" fill="url(#g49)" stroke="#8e8e8e" stroke-width="1"/><path d="M8.4 0.5 V3.6 H11.5" fill="#fafafa" stroke="#8e8e8e" stroke-width="0.9"/></svg></div>
<div class="t " style="left:564.5px;top:535px;letter-spacing:-0.3px;">riux32_r</div>
<div class="t " style="left:700px;top:535px;width:54.3px;text-align:right;letter-spacing:-0.3px;">11 KB</div>
<div class="t " style="left:768px;top:535px;">2025/7/7</div>
<div class="t " style="left:918.5px;top:535px;letter-spacing:0.12px;">rwxr-xr-x</div>
<div class="t " style="left:997.5px;top:535px;">91951<span style="letter-spacing:-1.05px">...</span></div>
<div class="a" style="left:548px;top:555px"><svg width="12" height="16" viewBox="0 0 12 16"><defs><linearGradient id="g49" x1="0" y1="0" x2="0" y2="1"><stop offset="0" stop-color="#ffffff"/><stop offset="1" stop-color="#f1f1f1"/></linearGradient></defs><path d="M0.5 0.5 H8.4 L11.5 3.6 V15.5 H0.5 Z" fill="url(#g49)" stroke="#8e8e8e" stroke-width="1"/><path d="M8.4 0.5 V3.6 H11.5" fill="#fafafa" stroke="#8e8e8e" stroke-width="0.9"/></svg></div>
<div class="t " style="left:564.5px;top:556px;letter-spacing:-0.44px;">riux32_w</div>
<div class="t " style="left:700px;top:556px;width:54.3px;text-align:right;letter-spacing:-0.3px;">11 KB</div>
<div class="t " style="left:768px;top:556px;">2025/7/7</div>
<div class="t " style="left:918.5px;top:556px;letter-spacing:0.12px;">rwxr-xr-x</div>
<div class="t " style="left:997.5px;top:556px;">91951<span style="letter-spacing:-1.05px">...</span></div>
<div class="a" style="left:548px;top:576px"><svg width="12" height="16" viewBox="0 0 12 16"><defs><linearGradient id="g49" x1="0" y1="0" x2="0" y2="1"><stop offset="0" stop-color="#ffffff"/><stop offset="1" stop-color="#f1f1f1"/></linearGradient></defs><path d="M0.5 0.5 H8.4 L11.5 3.6 V15.5 H0.5 Z" fill="url(#g49)" stroke="#8e8e8e" stroke-width="1"/><path d="M8.4 0.5 V3.6 H11.5" fill="#fafafa" stroke="#8e8e8e" stroke-width="0.9"/></svg></div>
<div class="t " style="left:564.5px;top:577px;">rz</div>
<div class="t " style="left:700px;top:577px;width:54.3px;text-align:right;letter-spacing:-0.3px;">58 KB</div>
<div class="t " style="left:768px;top:577px;">2025/1/1 14:57</div>
<div class="t " style="left:918.5px;top:577px;letter-spacing:0.12px;">rwxr-xr-x</div>
<div class="t " style="left:997.5px;top:577px;letter-spacing:0.52px;">root</div>
<div class="a" style="left:548px;top:597px"><svg width="12" height="16" viewBox="0 0 12 16"><defs><linearGradient id="g49" x1="0" y1="0" x2="0" y2="1"><stop offset="0" stop-color="#ffffff"/><stop offset="1" stop-color="#f1f1f1"/></linearGradient></defs><path d="M0.5 0.5 H8.4 L11.5 3.6 V15.5 H0.5 Z" fill="url(#g49)" stroke="#8e8e8e" stroke-width="1"/><path d="M8.4 0.5 V3.6 H11.5" fill="#fafafa" stroke="#8e8e8e" stroke-width="0.9"/></svg></div>
<div class="t " style="left:564.5px;top:598px;transform:scaleX(0.885);transform-origin:0 0;">sz</div>
<div class="t " style="left:700px;top:598px;width:54.3px;text-align:right;letter-spacing:-0.3px;">62 KB</div>
<div class="t " style="left:768px;top:598px;">2025/1/1 14:57</div>
<div class="t " style="left:918.5px;top:598px;letter-spacing:0.12px;">rwxr-xr-x</div>
<div class="t " style="left:997.5px;top:598px;letter-spacing:0.52px;">root</div>
<div class="a" style="left:548px;top:618px"><svg width="12" height="16" viewBox="0 0 12 16"><defs><linearGradient id="g50" x1="0" y1="0" x2="0" y2="1"><stop offset="0" stop-color="#ffffff"/><stop offset="1" stop-color="#f1f1f1"/></linearGradient></defs><path d="M0.5 0.5 H8.4 L11.5 3.6 V15.5 H0.5 Z" fill="url(#g50)" stroke="#8e8e8e" stroke-width="1"/><path d="M8.4 0.5 V3.6 H11.5" fill="#fafafa" stroke="#8e8e8e" stroke-width="0.9"/><path d="M2.2 3.5 H7.2" stroke="#9a9a9a" stroke-width="1"/><path d="M2.2 5.5 H9.8" stroke="#9a9a9a" stroke-width="1"/><path d="M2.2 7.5 H9.8" stroke="#9a9a9a" stroke-width="1"/><path d="M2.2 9.5 H9.8" stroke="#9a9a9a" stroke-width="1"/><path d="M2.2 11.5 H9.8" stroke="#9a9a9a" stroke-width="1"/><path d="M2.2 13.5 H9.8" stroke="#9a9a9a" stroke-width="1"/></svg></div>
<div class="t " style="left:564.5px;top:619px;">test.txt</div>
<div class="t " style="left:700px;top:619px;width:54.3px;text-align:right;letter-spacing:-0.3px;">1 KB</div>
<div class="t " style="left:768px;top:619px;">2025/1/1 14:59</div>
<div class="t " style="left:918.5px;top:619px;letter-spacing:0.4px;">rw-r--r--</div>
<div class="t " style="left:997.5px;top:619px;letter-spacing:0.52px;">root</div>
<div class="a" style="left:1057px;top:192px;width:16px;height:456px;background:#f0f0f0;"></div>
<div class="a" style="left:1057px;top:340px;width:15px;height:290px;background:#cdcdcd;"></div>
<svg class="a" style="left:1060.3px;top:199px" width="9" height="7" viewBox="0 0 9 7"><path d="M1.2 5.4 L4.5 2.1 L7.8 5.4" stroke="#505050" stroke-width="1.6" fill="none"/></svg>
<svg class="a" style="left:1060.3px;top:635px" width="9" height="7" viewBox="0 0 9 7"><path d="M1.2 1.6 L4.5 4.9 L7.8 1.6" stroke="#505050" stroke-width="1.6" fill="none"/></svg>
<div class="a" style="left:4px;top:279.5px;width:90px;height:18.5px;border:2px solid #ed1c24"></div>
<div class="a" style="left:539px;top:279px;width:100px;height:19px;border:2px solid #ed1c24"></div>
<svg class="a" style="left:120px;top:290px" width="420" height="24" viewBox="120 290 420 24"><path d="M127.3 302 L143 294.2 L143 298 L533 301.6 L533 303.6 L143 305.8 L143 309.6 Z" fill="#ed1c24"/></svg>
<div class="t " style="left:4.2px;top:653px;">0 B of 87.7 KB in 0 of 3</div>
<div class="t " style="left:543px;top:653px;letter-spacing:0.06px;">107 KB of 8.74 MB in 1 of 28</div>
<div class="a" style="left:1px;top:672px;width:1074px;height:1px;background:#dfdfdf;"></div>
<div class="a" style="left:852px;top:673px;width:1px;height:19px;background:#e6e6e6;"></div>
<div class="a" style="left:856px;top:673px;width:1px;height:19px;background:#e6e6e6;"></div>
<div class="a" style="left:887px;top:673px;width:1px;height:19px;background:#e6e6e6;"></div>
<div class="a" style="left:890px;top:673px;width:1px;height:19px;background:#e6e6e6;"></div>
<div class="a" style="left:957px;top:673px;width:1px;height:19px;background:#e6e6e6;"></div>
<div class="a" style="left:960px;top:673px;width:1px;height:19px;background:#e6e6e6;"></div>
<div class="a" style="left:992px;top:673px;width:1px;height:19px;background:#e6e6e6;"></div>
<div class="a" style="left:995px;top:673px;width:1px;height:19px;background:#e6e6e6;"></div>
<div class="a" style="left:864px;top:674px"><svg width="13" height="16" viewBox="0 0 13 16"><defs><linearGradient id="g51" x1="0" y1="0" x2="0" y2="1"><stop offset="0" stop-color="#f7d255"/><stop offset="0.5" stop-color="#e6b02a"/><stop offset="1" stop-color="#cf9418"/></linearGradient></defs><path d="M2.8 7.6 V5.2 a3.7 3.7 0 0 1 7.4 0 V7.6" fill="none" stroke="#b98a1a" stroke-width="2"/><path d="M3.2 7.6 V5.2 a3.3 3.3 0 0 1 6.6 0 V7.6" fill="none" stroke="#e9c04a" stroke-width="0.8"/><rect x="0.5" y="7.2" width="12" height="8.3" rx="1" fill="url(#g51)" stroke="#b58414" stroke-width="1"/><rect x="6" y="10" width="1.2" height="2.6" fill="#3a2a08"/></svg></div>
<div class="t " style="left:913px;top:674px;transform:scaleX(0.813);transform-origin:0 0;">SCP</div>
<div class="a" style="left:968px;top:674px"><svg width="15" height="16" viewBox="0 0 15 16"><rect x="0.5" y="1.5" width="9" height="7.5" fill="#d6d6d6" stroke="#bdbdbd" stroke-width="1"/><path d="M1 4 H9 M1 6.4 H9" stroke="#c4c4c4" stroke-width="1"/><path d="M8 0.8 H12.6 V12 M10.4 12 V10 H12.6 M9 15 H14.4 M11.7 12 V15" fill="none" stroke="#bdbdbd" stroke-width="1.6"/></svg></div>
<div class="t " style="left:1013px;top:674px;letter-spacing:-0.38px;">0:04:02</div>
<svg class="a" style="left:1064px;top:682px" width="10" height="10" viewBox="0 0 10 10"><g fill="#bfbfbf"><rect x="7" y="0" width="2" height="2"/><rect x="4" y="3" width="2" height="2"/><rect x="7" y="3" width="2" height="2"/><rect x="1" y="6" width="2" height="2"/><rect x="4" y="6" width="2" height="2"/><rect x="7" y="6" width="2" height="2"/></g></svg>
</div>
</body></html>
